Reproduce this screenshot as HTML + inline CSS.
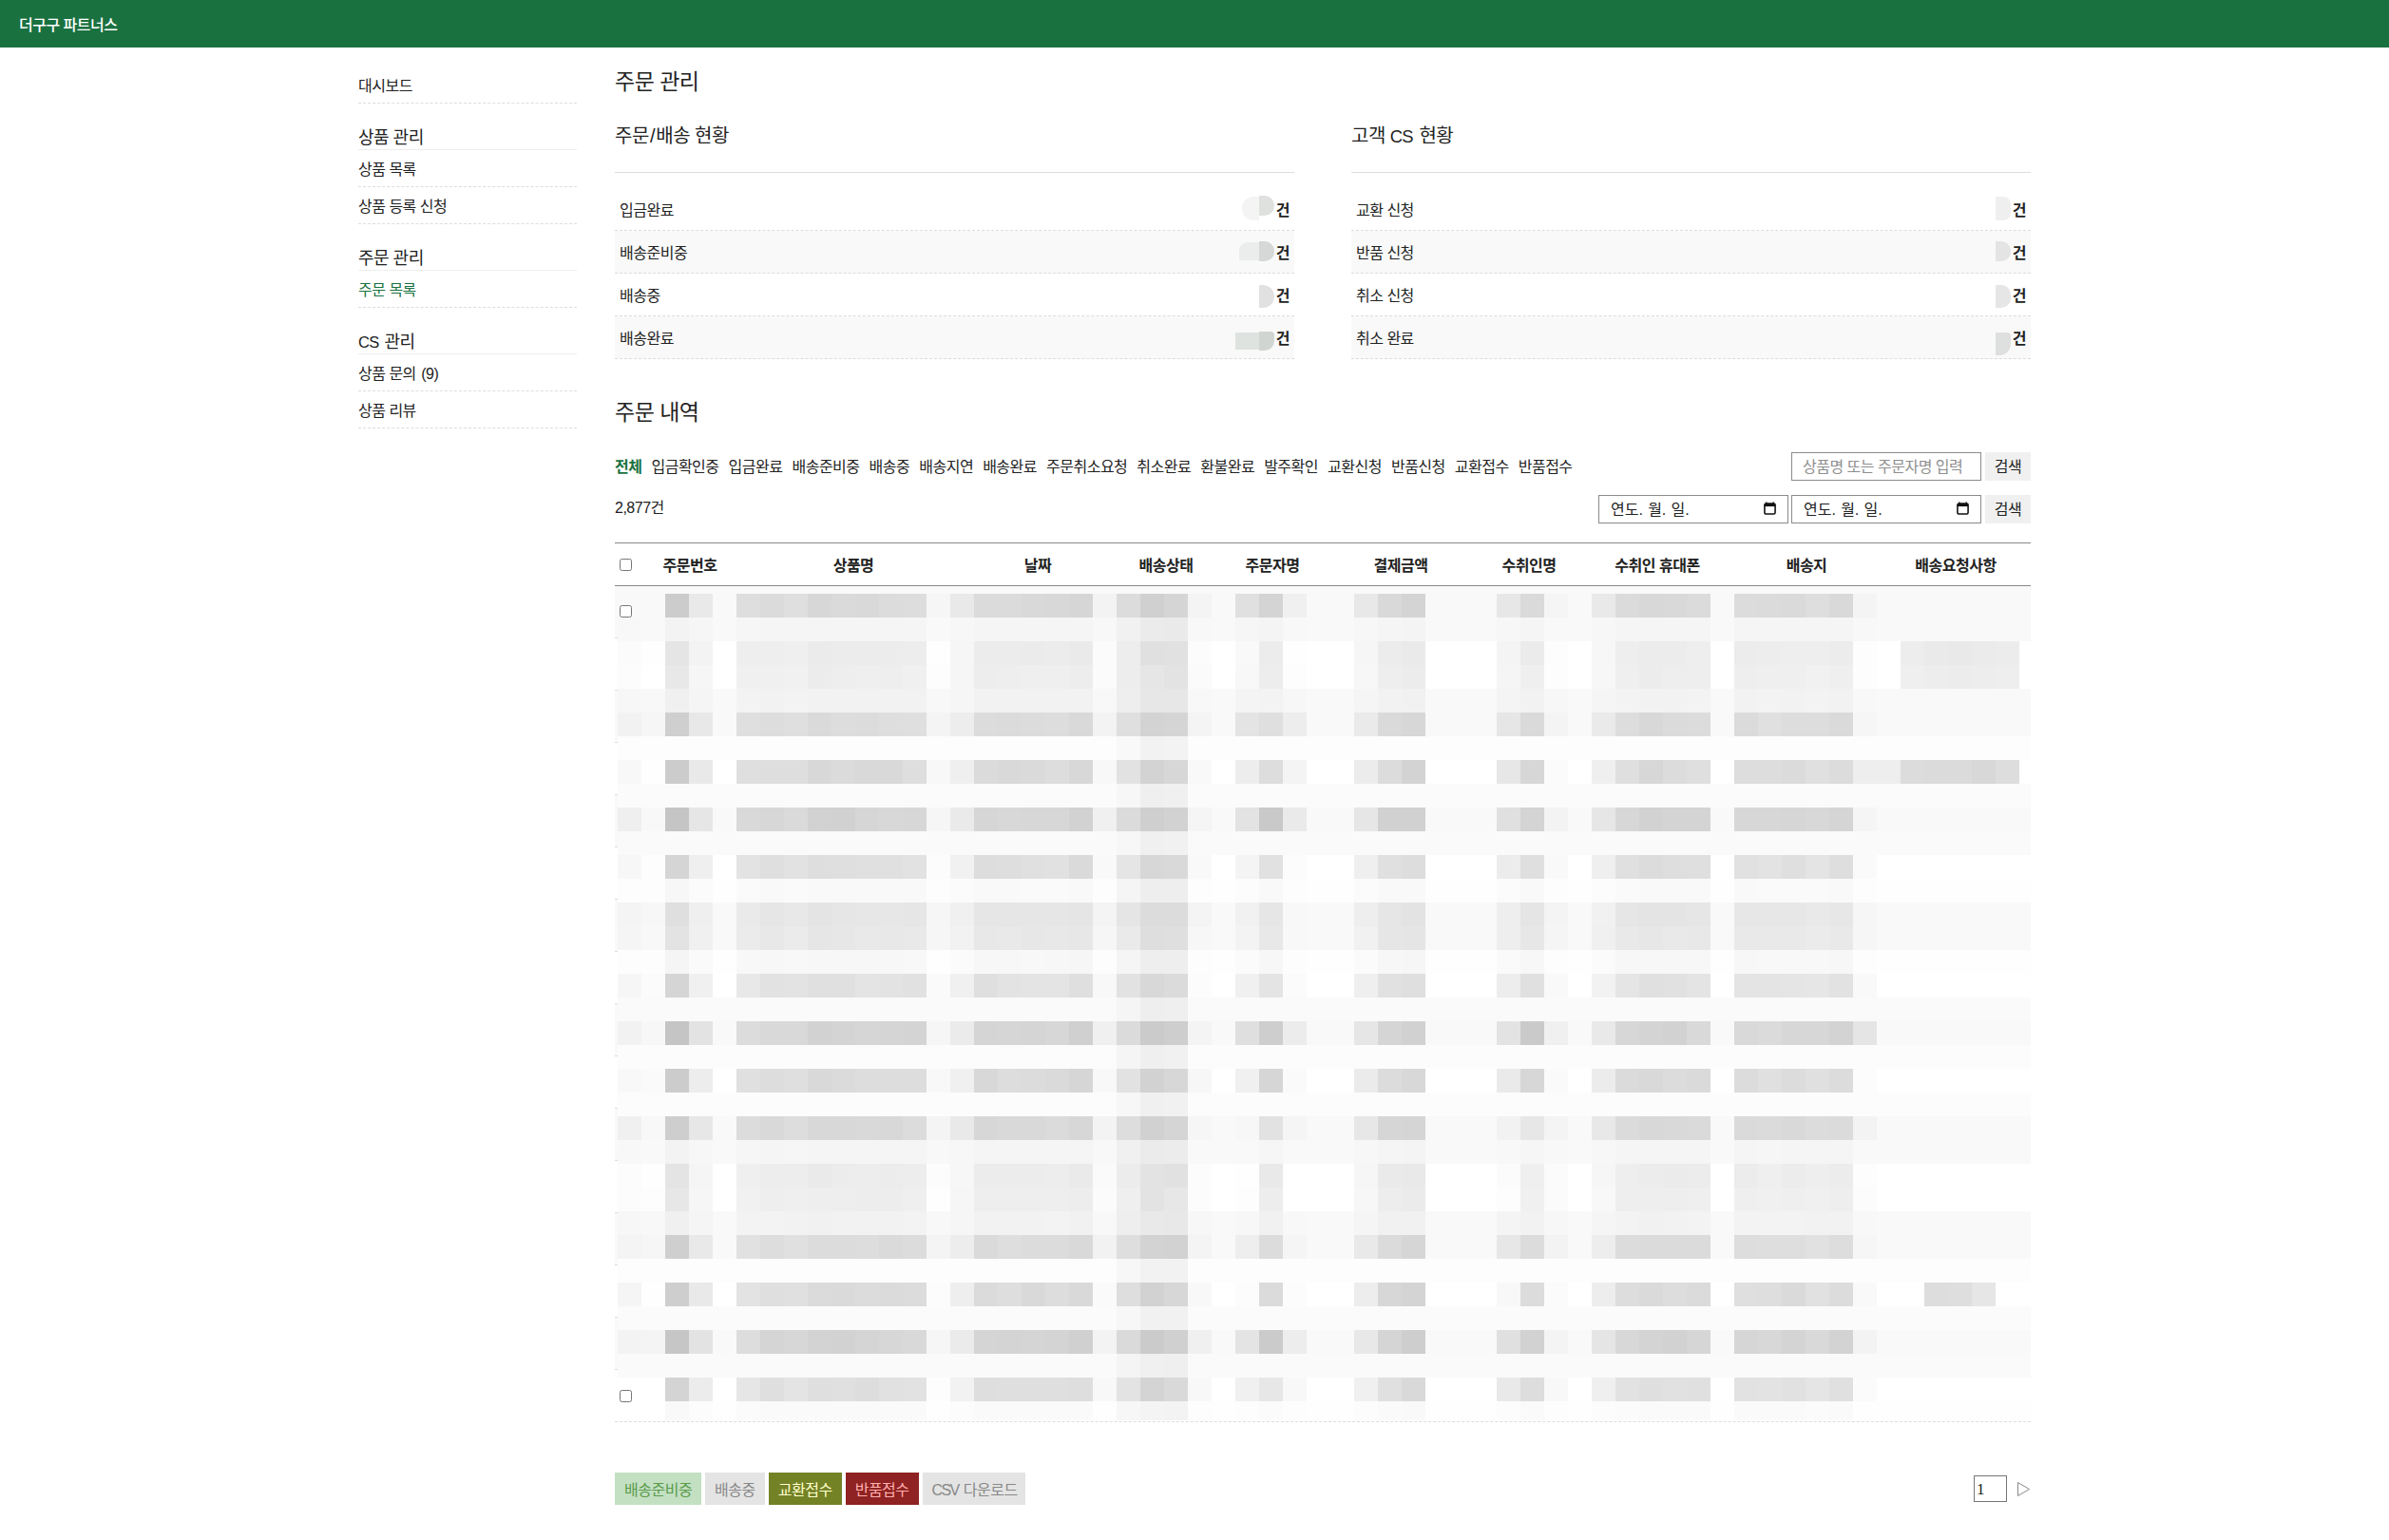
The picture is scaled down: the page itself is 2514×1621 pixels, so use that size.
<!DOCTYPE html>
<html lang="ko">
<head>
<meta charset="utf-8">
<title>더구구 파트너스</title>
<style>
*{box-sizing:border-box;}
html,body{margin:0;padding:0;}
body{width:2514px;height:1621px;overflow:hidden;background:#fff;color:#222;
 font-family:"Liberation Sans","Noto Sans CJK KR",sans-serif;font-size:16px;line-height:24px;letter-spacing:-0.5px;position:relative;}
a{color:inherit;text-decoration:none;}
ul{list-style:none;margin:0;padding:0;}
h1,h2,h3,h4,p{margin:0;font-weight:400;}
#hd{position:absolute;left:0;top:0;width:2514px;height:50px;background:#1a7140;color:#fff;overflow:hidden;}
#hd h1{position:absolute;left:20px;top:0;line-height:54px;font-size:16px;font-weight:500;}
#side{position:absolute;left:377px;top:70px;width:230px;}
#side .it{display:block;height:39px;line-height:42px;border-bottom:1px dashed #ddd;overflow:hidden;}
#side .hd{display:block;margin-top:21px;height:28px;line-height:31px;font-size:18px;border-bottom:1px solid #eee;overflow:hidden;}
#side .on{color:#1a7140;}
#main{position:absolute;left:647px;top:0;width:1490px;}
.abs{position:absolute;white-space:nowrap;}
h2.t{font-size:23px;line-height:37px;}
h3.t{font-size:20px;line-height:30px;}
.hr{position:absolute;height:1px;background:#ddd;}
.st{position:absolute;top:198px;width:715px;}
.st li{height:45px;border-bottom:1px dashed #ddd;padding:0 5px;line-height:48px;position:relative;overflow:hidden;}
.st li:nth-child(even){background:#f9f9f9;}
.st li b{position:absolute;right:5px;top:0;font-weight:700;}
.st li i{position:absolute;display:block;}
#tabs{left:0;top:480px;line-height:24px;}
#tabs a{margin-right:10px;}
#tabs a.on{color:#1a7140;font-weight:700;}
.inp{position:absolute;height:30px;border:1px solid #8a8a8a;background:#fff;line-height:30px;padding:0 11px;font-size:16px;overflow:hidden;}
.btn{position:absolute;height:30px;width:48px;background:#f0f0f0;line-height:32px;text-align:center;font-size:16px;overflow:hidden;}
.cal{position:absolute;right:12px;top:6px;}
.l{font-size:.92em;letter-spacing:-0.8px;margin-right:1.6px;}
#th{position:absolute;left:0;top:571px;width:1490px;height:46px;border-top:1px solid #888;border-bottom:1px solid #888;}
#th span{position:absolute;top:0;line-height:47px;font-weight:700;transform:translateX(-50%);white-space:nowrap;}
.cb{position:absolute;width:13px;height:13px;border:1px solid #767676;border-radius:2.5px;background:#fff;}
#tb{position:absolute;left:0;top:617px;width:1490px;}
#tb div{height:55px;border-bottom:1px dashed #ddd;}
#tb div:nth-child(odd){background:#f9f9f9;}
#acts{left:0;top:1550px;font-size:0;}
#acts span{display:inline-block;height:34px;line-height:38px;padding:0 10px;font-size:16px;margin-right:4px;overflow:hidden;vertical-align:top;}
#acts span u{text-decoration:none;letter-spacing:-1.7px;margin-right:1.5px;}
</style>
</head>
<body>
<div id="hd"><h1>더구구 파트너스</h1></div>
<div id="side">
 <a class="it">대시보드</a>
 <span class="hd">상품 관리</span>
 <a class="it">상품 목록</a>
 <a class="it">상품 등록 신청</a>
 <span class="hd">주문 관리</span>
 <a class="it on">주문 목록</a>
 <span class="hd"><span class="l">CS</span> 관리</span>
 <a class="it">상품 문의 <span style="margin-left:1.5px">(9)</span></a>
 <a class="it">상품 리뷰</a>
</div>
<div id="main">
 <h2 class="t abs" style="left:0;top:68px">주문 관리</h2>
 <h3 class="t abs" style="left:0;top:128px">주문<span style="margin:0 1.2px">/</span>배송 현황</h3>
 <div class="hr" style="left:0;top:181px;width:715px"></div>
 <ul class="st" style="left:0">
  <li>입금완료<b>건</b></li>
  <li>배송준비중<b>건</b></li>
  <li>배송중<b>건</b></li>
  <li>배송완료<b>건</b></li>
 </ul>
 <h3 class="t abs" style="left:775px;top:128px">고객 <span class="l">CS</span> 현황</h3>
 <div class="hr" style="left:775px;top:181px;width:715px"></div>
 <ul class="st" style="left:775px">
  <li>교환 신청<b>건</b></li>
  <li>반품 신청<b>건</b></li>
  <li>취소 신청<b>건</b></li>
  <li>취소 완료<b>건</b></li>
 </ul>
 <i class="abs" style="left:660px;top:207px;width:18px;height:25px;background:#f3f4f3;border-radius:12px 0 0 12px"></i><i class="abs" style="left:678px;top:206px;width:16px;height:21px;background:#dfe1df;border-radius:0 10px 10px 0"></i><i class="abs" style="left:657px;top:255px;width:21px;height:19px;background:#ebecec;border-radius:9px 0 0 2px"></i><i class="abs" style="left:678px;top:254px;width:16px;height:21px;background:#d5d8d6;border-radius:0 10px 10px 0"></i><i class="abs" style="left:678px;top:300px;width:16px;height:24px;background:#e0e1e0;border-radius:0 12px 12px 0"></i><i class="abs" style="left:653px;top:350px;width:25px;height:18px;background:#dfe3e0;border-radius:0"></i><i class="abs" style="left:678px;top:349px;width:16px;height:20px;background:#d0d5d2;border-radius:0 4px 10px 0"></i><i class="abs" style="left:1453px;top:207px;width:16px;height:25px;background:#eeefee;border-radius:0 8px 8px 0"></i><i class="abs" style="left:1453px;top:254px;width:16px;height:21px;background:#e3e4e3;border-radius:0 10px 10px 0"></i><i class="abs" style="left:1453px;top:300px;width:16px;height:24px;background:#e5e6e5;border-radius:0 10px 10px 0"></i><i class="abs" style="left:1453px;top:350px;width:16px;height:24px;background:#dee0df;border-radius:0 4px 12px 0"></i>
 <h2 class="t abs" style="left:0;top:416px">주문 내역</h2>
 <div id="tabs" class="abs"><a class="on">전체</a><a>입금확인중</a><a>입금완료</a><a>배송준비중</a><a>배송중</a><a>배송지연</a><a>배송완료</a><a>주문취소요청</a><a>취소완료</a><a>환불완료</a><a>발주확인</a><a>교환신청</a><a>반품신청</a><a>교환접수</a><a>반품접수</a></div>
 <div class="inp" style="left:1238px;top:476px;width:200px;color:#8e8e8e">상품명 또는 주문자명 입력</div>
 <div class="btn" style="left:1442px;top:476px">검색</div>
 <div class="abs" style="left:0;top:523px">2,877건</div>
 <div class="inp" style="left:1035px;top:521px;width:200px;letter-spacing:0;word-spacing:0.8px;padding-left:12px">연도. 월. 일.<svg class="cal" width="13" height="14" viewBox="0 0 14 15"><path d="M3 0.5v2M11 0.5v2" stroke="#111" stroke-width="1.6" fill="none"/><rect x="1" y="2.2" width="12" height="11.8" rx="1.6" fill="none" stroke="#111" stroke-width="1.7"/><rect x="1" y="2.2" width="12" height="3.2" fill="#111"/></svg></div>
 <div class="inp" style="left:1238px;top:521px;width:200px;letter-spacing:0;word-spacing:0.8px;padding-left:12px">연도. 월. 일.<svg class="cal" width="13" height="14" viewBox="0 0 14 15"><path d="M3 0.5v2M11 0.5v2" stroke="#111" stroke-width="1.6" fill="none"/><rect x="1" y="2.2" width="12" height="11.8" rx="1.6" fill="none" stroke="#111" stroke-width="1.7"/><rect x="1" y="2.2" width="12" height="3.2" fill="#111"/></svg></div>
 <div class="btn" style="left:1442px;top:521px">검색</div>
 <div id="th">
  <div class="cb" style="left:5px;top:16px"></div>
  <span style="left:79px">주문번호</span>
  <span style="left:251px">상품명</span>
  <span style="left:445px">날짜</span>
  <span style="left:580px">배송상태</span>
  <span style="left:692px">주문자명</span>
  <span style="left:827px">결제금액</span>
  <span style="left:962px">수취인명</span>
  <span style="left:1097px">수취인 휴대폰</span>
  <span style="left:1254px">배송지</span>
  <span style="left:1411px">배송요청사항</span>
 </div>
 <div id="tb"><div></div><div></div><div></div><div></div><div></div><div></div><div></div><div></div><div></div><div></div><div></div><div></div><div></div><div></div><div></div><div></div></div>
 <div class="cb" style="left:5px;top:637px"></div>
 <div class="cb" style="left:5px;top:1463px"></div>
 <svg id="mz" class="abs" style="left:3px;top:625px" width="1487" height="870" viewBox="0 0 1487 870" shape-rendering="crispEdges">
<rect x="50" y="0" width="25" height="25" fill="#cccccc"/>
<rect x="75" y="0" width="25" height="25" fill="#e9e9e9"/>
<rect x="100" y="0" width="25" height="25" fill="#f9f9f9"/>
<rect x="125" y="0" width="25" height="25" fill="#dedede"/>
<rect x="150" y="0" width="25" height="25" fill="#dbdbdb"/>
<rect x="175" y="0" width="25" height="25" fill="#dfdfdf"/>
<rect x="200" y="0" width="25" height="25" fill="#d7d7d7"/>
<rect x="225" y="0" width="25" height="25" fill="#dadada"/>
<rect x="250" y="0" width="25" height="25" fill="#d9d9d9"/>
<rect x="275" y="0" width="25" height="25" fill="#dcdcdc"/>
<rect x="300" y="0" width="25" height="25" fill="#dddddd"/>
<rect x="325" y="0" width="25" height="25" fill="#f6f6f6"/>
<rect x="350" y="0" width="25" height="25" fill="#e9e9e9"/>
<rect x="375" y="0" width="50" height="25" fill="#dbdbdb"/>
<rect x="425" y="0" width="25" height="25" fill="#d9d9d9"/>
<rect x="450" y="0" width="25" height="25" fill="#d8d8d8"/>
<rect x="475" y="0" width="25" height="25" fill="#d6d6d6"/>
<rect x="500" y="0" width="25" height="25" fill="#f3f3f3"/>
<rect x="525" y="0" width="25" height="25" fill="#dcdcdc"/>
<rect x="550" y="0" width="25" height="25" fill="#d0d0d0"/>
<rect x="575" y="0" width="25" height="25" fill="#d5d5d5"/>
<rect x="600" y="0" width="25" height="25" fill="#f4f4f4"/>
<rect x="625" y="0" width="25" height="25" fill="#f9f9f9"/>
<rect x="650" y="0" width="25" height="25" fill="#e0e0e0"/>
<rect x="675" y="0" width="25" height="25" fill="#d4d4d4"/>
<rect x="700" y="0" width="25" height="25" fill="#f0f0f0"/>
<rect x="725" y="0" width="50" height="25" fill="#f9f9f9"/>
<rect x="775" y="0" width="25" height="25" fill="#e8e8e8"/>
<rect x="800" y="0" width="25" height="25" fill="#d9d9d9"/>
<rect x="825" y="0" width="25" height="25" fill="#d4d4d4"/>
<rect x="850" y="0" width="75" height="25" fill="#f9f9f9"/>
<rect x="925" y="0" width="25" height="25" fill="#e7e7e7"/>
<rect x="950" y="0" width="25" height="25" fill="#dadada"/>
<rect x="975" y="0" width="25" height="25" fill="#f5f5f5"/>
<rect x="1000" y="0" width="25" height="25" fill="#f9f9f9"/>
<rect x="1025" y="0" width="25" height="25" fill="#e9e9e9"/>
<rect x="1050" y="0" width="25" height="25" fill="#dbdbdb"/>
<rect x="1075" y="0" width="25" height="25" fill="#d8d8d8"/>
<rect x="1100" y="0" width="25" height="25" fill="#d9d9d9"/>
<rect x="1125" y="0" width="25" height="25" fill="#dbdbdb"/>
<rect x="1150" y="0" width="25" height="25" fill="#f9f9f9"/>
<rect x="1175" y="0" width="25" height="25" fill="#dcdcdc"/>
<rect x="1200" y="0" width="25" height="25" fill="#dbdbdb"/>
<rect x="1225" y="0" width="25" height="25" fill="#dadada"/>
<rect x="1250" y="0" width="25" height="25" fill="#dedede"/>
<rect x="1275" y="0" width="25" height="25" fill="#d9d9d9"/>
<rect x="1300" y="0" width="25" height="25" fill="#f4f4f4"/>
<rect x="1325" y="0" width="162" height="25" fill="#f9f9f9"/>
<rect x="0" y="25" width="25" height="25" fill="#f8f8f8"/>
<rect x="25" y="25" width="25" height="25" fill="#f9f9f9"/>
<rect x="50" y="25" width="25" height="25" fill="#f3f3f3"/>
<rect x="75" y="25" width="25" height="25" fill="#f6f6f6"/>
<rect x="100" y="25" width="25" height="25" fill="#f9f9f9"/>
<rect x="125" y="25" width="25" height="25" fill="#f6f6f6"/>
<rect x="150" y="25" width="175" height="25" fill="#f5f5f5"/>
<rect x="325" y="25" width="25" height="25" fill="#f9f9f9"/>
<rect x="350" y="25" width="25" height="25" fill="#f7f7f7"/>
<rect x="375" y="25" width="125" height="25" fill="#f5f5f5"/>
<rect x="500" y="25" width="25" height="25" fill="#f8f8f8"/>
<rect x="525" y="25" width="25" height="25" fill="#f1f1f1"/>
<rect x="550" y="25" width="25" height="25" fill="#ebebeb"/>
<rect x="575" y="25" width="25" height="25" fill="#eaeaea"/>
<rect x="600" y="25" width="25" height="25" fill="#f8f8f8"/>
<rect x="625" y="25" width="25" height="25" fill="#f9f9f9"/>
<rect x="650" y="25" width="25" height="25" fill="#f6f6f6"/>
<rect x="675" y="25" width="25" height="25" fill="#f4f4f4"/>
<rect x="700" y="25" width="25" height="25" fill="#f8f8f8"/>
<rect x="725" y="25" width="50" height="25" fill="#f9f9f9"/>
<rect x="775" y="25" width="25" height="25" fill="#f7f7f7"/>
<rect x="800" y="25" width="25" height="25" fill="#f5f5f5"/>
<rect x="825" y="25" width="25" height="25" fill="#f4f4f4"/>
<rect x="850" y="25" width="75" height="25" fill="#f9f9f9"/>
<rect x="925" y="25" width="25" height="25" fill="#f7f7f7"/>
<rect x="950" y="25" width="25" height="25" fill="#f5f5f5"/>
<rect x="975" y="25" width="50" height="25" fill="#f9f9f9"/>
<rect x="1025" y="25" width="25" height="25" fill="#f7f7f7"/>
<rect x="1050" y="25" width="100" height="25" fill="#f5f5f5"/>
<rect x="1150" y="25" width="25" height="25" fill="#f9f9f9"/>
<rect x="1175" y="25" width="125" height="25" fill="#f5f5f5"/>
<rect x="1300" y="25" width="25" height="25" fill="#f8f8f8"/>
<rect x="1325" y="25" width="162" height="25" fill="#f9f9f9"/>
<rect x="0" y="50" width="25" height="25" fill="#fbfbfb"/>
<rect x="25" y="50" width="25" height="25" fill="#fefefe"/>
<rect x="50" y="50" width="25" height="25" fill="#e5e5e5"/>
<rect x="75" y="50" width="25" height="25" fill="#f3f3f3"/>
<rect x="100" y="50" width="25" height="25" fill="#ffffff"/>
<rect x="125" y="50" width="50" height="25" fill="#eeeeee"/>
<rect x="175" y="50" width="25" height="25" fill="#efefef"/>
<rect x="200" y="50" width="25" height="25" fill="#ebebeb"/>
<rect x="225" y="50" width="75" height="25" fill="#ececec"/>
<rect x="300" y="50" width="25" height="25" fill="#ededed"/>
<rect x="325" y="50" width="25" height="25" fill="#fefefe"/>
<rect x="350" y="50" width="25" height="25" fill="#f6f6f6"/>
<rect x="375" y="50" width="50" height="25" fill="#ececec"/>
<rect x="425" y="50" width="25" height="25" fill="#ebebeb"/>
<rect x="450" y="50" width="25" height="25" fill="#ececec"/>
<rect x="475" y="50" width="25" height="25" fill="#eaeaea"/>
<rect x="500" y="50" width="25" height="25" fill="#fbfbfb"/>
<rect x="525" y="50" width="25" height="25" fill="#ededed"/>
<rect x="550" y="50" width="25" height="25" fill="#e0e0e0"/>
<rect x="575" y="50" width="25" height="25" fill="#e1e1e1"/>
<rect x="600" y="50" width="25" height="25" fill="#fcfcfc"/>
<rect x="625" y="50" width="25" height="25" fill="#ffffff"/>
<rect x="650" y="50" width="25" height="25" fill="#f9f9f9"/>
<rect x="675" y="50" width="25" height="25" fill="#ececec"/>
<rect x="700" y="50" width="25" height="25" fill="#fefefe"/>
<rect x="725" y="50" width="50" height="25" fill="#ffffff"/>
<rect x="775" y="50" width="25" height="25" fill="#f6f6f6"/>
<rect x="800" y="50" width="25" height="25" fill="#ececec"/>
<rect x="825" y="50" width="25" height="25" fill="#eaeaea"/>
<rect x="850" y="50" width="75" height="25" fill="#ffffff"/>
<rect x="925" y="50" width="25" height="25" fill="#f4f4f4"/>
<rect x="950" y="50" width="25" height="25" fill="#ebebeb"/>
<rect x="975" y="50" width="25" height="25" fill="#fdfdfd"/>
<rect x="1000" y="50" width="25" height="25" fill="#ffffff"/>
<rect x="1025" y="50" width="25" height="25" fill="#f7f7f7"/>
<rect x="1050" y="50" width="25" height="25" fill="#eeeeee"/>
<rect x="1075" y="50" width="50" height="25" fill="#ececec"/>
<rect x="1125" y="50" width="25" height="25" fill="#eeeeee"/>
<rect x="1150" y="50" width="25" height="25" fill="#ffffff"/>
<rect x="1175" y="50" width="25" height="25" fill="#ececec"/>
<rect x="1200" y="50" width="25" height="25" fill="#ededed"/>
<rect x="1225" y="50" width="50" height="25" fill="#eeeeee"/>
<rect x="1275" y="50" width="25" height="25" fill="#ececec"/>
<rect x="1300" y="50" width="25" height="25" fill="#fdfdfd"/>
<rect x="1325" y="50" width="25" height="25" fill="#ffffff"/>
<rect x="1350" y="50" width="25" height="25" fill="#ededed"/>
<rect x="1375" y="50" width="25" height="25" fill="#eaeaea"/>
<rect x="1400" y="50" width="25" height="25" fill="#e9e9e9"/>
<rect x="1425" y="50" width="25" height="25" fill="#ebebeb"/>
<rect x="1450" y="50" width="25" height="25" fill="#ececec"/>
<rect x="1475" y="50" width="12" height="25" fill="#ffffff"/>
<rect x="0" y="75" width="25" height="25" fill="#fcfcfc"/>
<rect x="25" y="75" width="25" height="25" fill="#ffffff"/>
<rect x="50" y="75" width="25" height="25" fill="#e8e8e8"/>
<rect x="75" y="75" width="25" height="25" fill="#f6f6f6"/>
<rect x="100" y="75" width="25" height="25" fill="#ffffff"/>
<rect x="125" y="75" width="50" height="25" fill="#f0f0f0"/>
<rect x="175" y="75" width="25" height="25" fill="#f1f1f1"/>
<rect x="200" y="75" width="25" height="25" fill="#ececec"/>
<rect x="225" y="75" width="25" height="25" fill="#eeeeee"/>
<rect x="250" y="75" width="25" height="25" fill="#efefef"/>
<rect x="275" y="75" width="25" height="25" fill="#eeeeee"/>
<rect x="300" y="75" width="25" height="25" fill="#f0f0f0"/>
<rect x="325" y="75" width="25" height="25" fill="#fdfdfd"/>
<rect x="350" y="75" width="25" height="25" fill="#f6f6f6"/>
<rect x="375" y="75" width="25" height="25" fill="#ededed"/>
<rect x="400" y="75" width="25" height="25" fill="#eeeeee"/>
<rect x="425" y="75" width="50" height="25" fill="#efefef"/>
<rect x="475" y="75" width="25" height="25" fill="#ededed"/>
<rect x="500" y="75" width="25" height="25" fill="#fbfbfb"/>
<rect x="525" y="75" width="25" height="25" fill="#ededed"/>
<rect x="550" y="75" width="25" height="25" fill="#e6e6e6"/>
<rect x="575" y="75" width="25" height="25" fill="#e3e3e3"/>
<rect x="600" y="75" width="25" height="25" fill="#fbfbfb"/>
<rect x="625" y="75" width="25" height="25" fill="#ffffff"/>
<rect x="650" y="75" width="25" height="25" fill="#f8f8f8"/>
<rect x="675" y="75" width="25" height="25" fill="#ededed"/>
<rect x="700" y="75" width="25" height="25" fill="#fdfdfd"/>
<rect x="725" y="75" width="50" height="25" fill="#ffffff"/>
<rect x="775" y="75" width="25" height="25" fill="#f7f7f7"/>
<rect x="800" y="75" width="25" height="25" fill="#eeeeee"/>
<rect x="825" y="75" width="25" height="25" fill="#ececec"/>
<rect x="850" y="75" width="75" height="25" fill="#ffffff"/>
<rect x="925" y="75" width="25" height="25" fill="#f5f5f5"/>
<rect x="950" y="75" width="25" height="25" fill="#efefef"/>
<rect x="975" y="75" width="25" height="25" fill="#fdfdfd"/>
<rect x="1000" y="75" width="25" height="25" fill="#ffffff"/>
<rect x="1025" y="75" width="25" height="25" fill="#f7f7f7"/>
<rect x="1050" y="75" width="25" height="25" fill="#efefef"/>
<rect x="1075" y="75" width="25" height="25" fill="#ececec"/>
<rect x="1100" y="75" width="50" height="25" fill="#eeeeee"/>
<rect x="1150" y="75" width="25" height="25" fill="#ffffff"/>
<rect x="1175" y="75" width="25" height="25" fill="#eeeeee"/>
<rect x="1200" y="75" width="50" height="25" fill="#efefef"/>
<rect x="1250" y="75" width="25" height="25" fill="#f1f1f1"/>
<rect x="1275" y="75" width="25" height="25" fill="#efefef"/>
<rect x="1300" y="75" width="25" height="25" fill="#fdfdfd"/>
<rect x="1325" y="75" width="25" height="25" fill="#ffffff"/>
<rect x="1350" y="75" width="25" height="25" fill="#efefef"/>
<rect x="1375" y="75" width="25" height="25" fill="#ededed"/>
<rect x="1400" y="75" width="25" height="25" fill="#ececec"/>
<rect x="1425" y="75" width="25" height="25" fill="#ededed"/>
<rect x="1450" y="75" width="25" height="25" fill="#eeeeee"/>
<rect x="1475" y="75" width="12" height="25" fill="#ffffff"/>
<rect x="0" y="100" width="25" height="25" fill="#f7f7f7"/>
<rect x="25" y="100" width="25" height="25" fill="#f8f8f8"/>
<rect x="50" y="100" width="25" height="25" fill="#f0f0f0"/>
<rect x="75" y="100" width="25" height="25" fill="#f5f5f5"/>
<rect x="100" y="100" width="25" height="25" fill="#f9f9f9"/>
<rect x="125" y="100" width="25" height="25" fill="#f3f3f3"/>
<rect x="150" y="100" width="25" height="25" fill="#f2f2f2"/>
<rect x="175" y="100" width="25" height="25" fill="#f3f3f3"/>
<rect x="200" y="100" width="125" height="25" fill="#f2f2f2"/>
<rect x="325" y="100" width="25" height="25" fill="#f8f8f8"/>
<rect x="350" y="100" width="25" height="25" fill="#f6f6f6"/>
<rect x="375" y="100" width="125" height="25" fill="#f2f2f2"/>
<rect x="500" y="100" width="25" height="25" fill="#f8f8f8"/>
<rect x="525" y="100" width="25" height="25" fill="#eeeeee"/>
<rect x="550" y="100" width="50" height="25" fill="#e7e7e7"/>
<rect x="600" y="100" width="25" height="25" fill="#f8f8f8"/>
<rect x="625" y="100" width="25" height="25" fill="#f9f9f9"/>
<rect x="650" y="100" width="25" height="25" fill="#f4f4f4"/>
<rect x="675" y="100" width="25" height="25" fill="#f3f3f3"/>
<rect x="700" y="100" width="25" height="25" fill="#f7f7f7"/>
<rect x="725" y="100" width="50" height="25" fill="#f9f9f9"/>
<rect x="775" y="100" width="25" height="25" fill="#f5f5f5"/>
<rect x="800" y="100" width="25" height="25" fill="#f2f2f2"/>
<rect x="825" y="100" width="25" height="25" fill="#f1f1f1"/>
<rect x="850" y="100" width="75" height="25" fill="#f9f9f9"/>
<rect x="925" y="100" width="25" height="25" fill="#f4f4f4"/>
<rect x="950" y="100" width="25" height="25" fill="#f2f2f2"/>
<rect x="975" y="100" width="25" height="25" fill="#f7f7f7"/>
<rect x="1000" y="100" width="25" height="25" fill="#f9f9f9"/>
<rect x="1025" y="100" width="25" height="25" fill="#f5f5f5"/>
<rect x="1050" y="100" width="25" height="25" fill="#f3f3f3"/>
<rect x="1075" y="100" width="50" height="25" fill="#f2f2f2"/>
<rect x="1125" y="100" width="25" height="25" fill="#f3f3f3"/>
<rect x="1150" y="100" width="25" height="25" fill="#f9f9f9"/>
<rect x="1175" y="100" width="25" height="25" fill="#f2f2f2"/>
<rect x="1200" y="100" width="25" height="25" fill="#f3f3f3"/>
<rect x="1225" y="100" width="25" height="25" fill="#f2f2f2"/>
<rect x="1250" y="100" width="25" height="25" fill="#f3f3f3"/>
<rect x="1275" y="100" width="25" height="25" fill="#f2f2f2"/>
<rect x="1300" y="100" width="25" height="25" fill="#f8f8f8"/>
<rect x="1325" y="100" width="162" height="25" fill="#f9f9f9"/>
<rect x="0" y="125" width="25" height="25" fill="#f2f2f2"/>
<rect x="25" y="125" width="25" height="25" fill="#f6f6f6"/>
<rect x="50" y="125" width="25" height="25" fill="#cfcfcf"/>
<rect x="75" y="125" width="25" height="25" fill="#e8e8e8"/>
<rect x="100" y="125" width="25" height="25" fill="#f9f9f9"/>
<rect x="125" y="125" width="25" height="25" fill="#dfdfdf"/>
<rect x="150" y="125" width="25" height="25" fill="#dddddd"/>
<rect x="175" y="125" width="25" height="25" fill="#dfdfdf"/>
<rect x="200" y="125" width="25" height="25" fill="#dadada"/>
<rect x="225" y="125" width="25" height="25" fill="#dddddd"/>
<rect x="250" y="125" width="25" height="25" fill="#dcdcdc"/>
<rect x="275" y="125" width="25" height="25" fill="#dedede"/>
<rect x="300" y="125" width="25" height="25" fill="#dfdfdf"/>
<rect x="325" y="125" width="25" height="25" fill="#f4f4f4"/>
<rect x="350" y="125" width="25" height="25" fill="#ededed"/>
<rect x="375" y="125" width="25" height="25" fill="#dcdcdc"/>
<rect x="400" y="125" width="25" height="25" fill="#dbdbdb"/>
<rect x="425" y="125" width="25" height="25" fill="#dcdcdc"/>
<rect x="450" y="125" width="25" height="25" fill="#dddddd"/>
<rect x="475" y="125" width="25" height="25" fill="#d9d9d9"/>
<rect x="500" y="125" width="25" height="25" fill="#f3f3f3"/>
<rect x="525" y="125" width="25" height="25" fill="#dfdfdf"/>
<rect x="550" y="125" width="25" height="25" fill="#d3d3d3"/>
<rect x="575" y="125" width="25" height="25" fill="#d5d5d5"/>
<rect x="600" y="125" width="25" height="25" fill="#f4f4f4"/>
<rect x="625" y="125" width="25" height="25" fill="#f9f9f9"/>
<rect x="650" y="125" width="25" height="25" fill="#e4e4e4"/>
<rect x="675" y="125" width="25" height="25" fill="#dfdfdf"/>
<rect x="700" y="125" width="25" height="25" fill="#ededed"/>
<rect x="725" y="125" width="50" height="25" fill="#f9f9f9"/>
<rect x="775" y="125" width="25" height="25" fill="#eaeaea"/>
<rect x="800" y="125" width="25" height="25" fill="#dadada"/>
<rect x="825" y="125" width="25" height="25" fill="#d7d7d7"/>
<rect x="850" y="125" width="75" height="25" fill="#f9f9f9"/>
<rect x="925" y="125" width="25" height="25" fill="#e6e6e6"/>
<rect x="950" y="125" width="25" height="25" fill="#dadada"/>
<rect x="975" y="125" width="25" height="25" fill="#f4f4f4"/>
<rect x="1000" y="125" width="25" height="25" fill="#f9f9f9"/>
<rect x="1025" y="125" width="25" height="25" fill="#eaeaea"/>
<rect x="1050" y="125" width="25" height="25" fill="#dddddd"/>
<rect x="1075" y="125" width="25" height="25" fill="#d8d8d8"/>
<rect x="1100" y="125" width="25" height="25" fill="#dbdbdb"/>
<rect x="1125" y="125" width="25" height="25" fill="#dcdcdc"/>
<rect x="1150" y="125" width="25" height="25" fill="#f9f9f9"/>
<rect x="1175" y="125" width="25" height="25" fill="#dbdbdb"/>
<rect x="1200" y="125" width="25" height="25" fill="#e0e0e0"/>
<rect x="1225" y="125" width="50" height="25" fill="#dddddd"/>
<rect x="1275" y="125" width="25" height="25" fill="#dadada"/>
<rect x="1300" y="125" width="25" height="25" fill="#f6f6f6"/>
<rect x="1325" y="125" width="162" height="25" fill="#f9f9f9"/>
<rect x="0" y="150" width="525" height="25" fill="#fdfdfd"/>
<rect x="525" y="150" width="25" height="25" fill="#f9f9f9"/>
<rect x="550" y="150" width="25" height="25" fill="#f2f2f2"/>
<rect x="575" y="150" width="25" height="25" fill="#f3f3f3"/>
<rect x="600" y="150" width="887" height="25" fill="#fdfdfd"/>
<rect x="0" y="175" width="25" height="25" fill="#f8f8f8"/>
<rect x="25" y="175" width="25" height="25" fill="#fefefe"/>
<rect x="50" y="175" width="25" height="25" fill="#cccccc"/>
<rect x="75" y="175" width="25" height="25" fill="#e9e9e9"/>
<rect x="100" y="175" width="25" height="25" fill="#ffffff"/>
<rect x="125" y="175" width="25" height="25" fill="#dfdfdf"/>
<rect x="150" y="175" width="50" height="25" fill="#dedede"/>
<rect x="200" y="175" width="25" height="25" fill="#d8d8d8"/>
<rect x="225" y="175" width="25" height="25" fill="#dbdbdb"/>
<rect x="250" y="175" width="50" height="25" fill="#d9d9d9"/>
<rect x="300" y="175" width="25" height="25" fill="#dedede"/>
<rect x="325" y="175" width="25" height="25" fill="#f8f8f8"/>
<rect x="350" y="175" width="25" height="25" fill="#efefef"/>
<rect x="375" y="175" width="25" height="25" fill="#dbdbdb"/>
<rect x="400" y="175" width="25" height="25" fill="#d9d9d9"/>
<rect x="425" y="175" width="25" height="25" fill="#dadada"/>
<rect x="450" y="175" width="25" height="25" fill="#dddddd"/>
<rect x="475" y="175" width="25" height="25" fill="#d8d8d8"/>
<rect x="500" y="175" width="25" height="25" fill="#f8f8f8"/>
<rect x="525" y="175" width="25" height="25" fill="#e2e2e2"/>
<rect x="550" y="175" width="25" height="25" fill="#d3d3d3"/>
<rect x="575" y="175" width="25" height="25" fill="#d7d7d7"/>
<rect x="600" y="175" width="25" height="25" fill="#f9f9f9"/>
<rect x="625" y="175" width="25" height="25" fill="#ffffff"/>
<rect x="650" y="175" width="25" height="25" fill="#ededed"/>
<rect x="675" y="175" width="25" height="25" fill="#dddddd"/>
<rect x="700" y="175" width="25" height="25" fill="#f4f4f4"/>
<rect x="725" y="175" width="50" height="25" fill="#ffffff"/>
<rect x="775" y="175" width="25" height="25" fill="#ececec"/>
<rect x="800" y="175" width="25" height="25" fill="#dcdcdc"/>
<rect x="825" y="175" width="25" height="25" fill="#d3d3d3"/>
<rect x="850" y="175" width="75" height="25" fill="#ffffff"/>
<rect x="925" y="175" width="25" height="25" fill="#e7e7e7"/>
<rect x="950" y="175" width="25" height="25" fill="#d7d7d7"/>
<rect x="975" y="175" width="25" height="25" fill="#fbfbfb"/>
<rect x="1000" y="175" width="25" height="25" fill="#ffffff"/>
<rect x="1025" y="175" width="25" height="25" fill="#efefef"/>
<rect x="1050" y="175" width="25" height="25" fill="#dfdfdf"/>
<rect x="1075" y="175" width="25" height="25" fill="#d7d7d7"/>
<rect x="1100" y="175" width="25" height="25" fill="#dcdcdc"/>
<rect x="1125" y="175" width="25" height="25" fill="#dfdfdf"/>
<rect x="1150" y="175" width="25" height="25" fill="#ffffff"/>
<rect x="1175" y="175" width="50" height="25" fill="#dddddd"/>
<rect x="1225" y="175" width="25" height="25" fill="#dbdbdb"/>
<rect x="1250" y="175" width="25" height="25" fill="#e0e0e0"/>
<rect x="1275" y="175" width="25" height="25" fill="#dcdcdc"/>
<rect x="1300" y="175" width="50" height="25" fill="#eeeeee"/>
<rect x="1350" y="175" width="25" height="25" fill="#dcdcdc"/>
<rect x="1375" y="175" width="50" height="25" fill="#dbdbdb"/>
<rect x="1425" y="175" width="25" height="25" fill="#d8d8d8"/>
<rect x="1450" y="175" width="25" height="25" fill="#dddddd"/>
<rect x="1475" y="175" width="12" height="25" fill="#ffffff"/>
<rect x="0" y="200" width="525" height="25" fill="#fbfbfb"/>
<rect x="525" y="200" width="25" height="25" fill="#f7f7f7"/>
<rect x="550" y="200" width="25" height="25" fill="#efefef"/>
<rect x="575" y="200" width="25" height="25" fill="#f0f0f0"/>
<rect x="600" y="200" width="887" height="25" fill="#fbfbfb"/>
<rect x="0" y="225" width="25" height="25" fill="#efefef"/>
<rect x="25" y="225" width="25" height="25" fill="#f8f8f8"/>
<rect x="50" y="225" width="25" height="25" fill="#c5c5c5"/>
<rect x="75" y="225" width="25" height="25" fill="#e6e6e6"/>
<rect x="100" y="225" width="25" height="25" fill="#f9f9f9"/>
<rect x="125" y="225" width="25" height="25" fill="#d9d9d9"/>
<rect x="150" y="225" width="25" height="25" fill="#d7d7d7"/>
<rect x="175" y="225" width="25" height="25" fill="#dadada"/>
<rect x="200" y="225" width="25" height="25" fill="#d2d2d2"/>
<rect x="225" y="225" width="25" height="25" fill="#d1d1d1"/>
<rect x="250" y="225" width="25" height="25" fill="#d6d6d6"/>
<rect x="275" y="225" width="25" height="25" fill="#d8d8d8"/>
<rect x="300" y="225" width="25" height="25" fill="#d7d7d7"/>
<rect x="325" y="225" width="25" height="25" fill="#f6f6f6"/>
<rect x="350" y="225" width="25" height="25" fill="#eaeaea"/>
<rect x="375" y="225" width="25" height="25" fill="#d6d6d6"/>
<rect x="400" y="225" width="25" height="25" fill="#d8d8d8"/>
<rect x="425" y="225" width="50" height="25" fill="#d7d7d7"/>
<rect x="475" y="225" width="25" height="25" fill="#d2d2d2"/>
<rect x="500" y="225" width="25" height="25" fill="#f0f0f0"/>
<rect x="525" y="225" width="25" height="25" fill="#dbdbdb"/>
<rect x="550" y="225" width="25" height="25" fill="#cfcfcf"/>
<rect x="575" y="225" width="25" height="25" fill="#d2d2d2"/>
<rect x="600" y="225" width="25" height="25" fill="#f5f5f5"/>
<rect x="625" y="225" width="25" height="25" fill="#f9f9f9"/>
<rect x="650" y="225" width="25" height="25" fill="#e3e3e3"/>
<rect x="675" y="225" width="25" height="25" fill="#c9c9c9"/>
<rect x="700" y="225" width="25" height="25" fill="#eaeaea"/>
<rect x="725" y="225" width="50" height="25" fill="#f9f9f9"/>
<rect x="775" y="225" width="25" height="25" fill="#e6e6e6"/>
<rect x="800" y="225" width="50" height="25" fill="#d1d1d1"/>
<rect x="850" y="225" width="75" height="25" fill="#f9f9f9"/>
<rect x="925" y="225" width="25" height="25" fill="#e0e0e0"/>
<rect x="950" y="225" width="25" height="25" fill="#d4d4d4"/>
<rect x="975" y="225" width="25" height="25" fill="#f3f3f3"/>
<rect x="1000" y="225" width="25" height="25" fill="#f9f9f9"/>
<rect x="1025" y="225" width="25" height="25" fill="#e6e6e6"/>
<rect x="1050" y="225" width="25" height="25" fill="#d7d7d7"/>
<rect x="1075" y="225" width="25" height="25" fill="#d2d2d2"/>
<rect x="1100" y="225" width="50" height="25" fill="#d4d4d4"/>
<rect x="1150" y="225" width="25" height="25" fill="#f9f9f9"/>
<rect x="1175" y="225" width="50" height="25" fill="#d7d7d7"/>
<rect x="1225" y="225" width="25" height="25" fill="#d6d6d6"/>
<rect x="1250" y="225" width="25" height="25" fill="#d8d8d8"/>
<rect x="1275" y="225" width="25" height="25" fill="#d5d5d5"/>
<rect x="1300" y="225" width="25" height="25" fill="#f5f5f5"/>
<rect x="1325" y="225" width="162" height="25" fill="#f9f9f9"/>
<rect x="0" y="250" width="525" height="25" fill="#fafafa"/>
<rect x="525" y="250" width="25" height="25" fill="#f7f7f7"/>
<rect x="550" y="250" width="25" height="25" fill="#f0f0f0"/>
<rect x="575" y="250" width="25" height="25" fill="#f1f1f1"/>
<rect x="600" y="250" width="887" height="25" fill="#fafafa"/>
<rect x="0" y="275" width="25" height="25" fill="#f7f7f7"/>
<rect x="25" y="275" width="25" height="25" fill="#fdfdfd"/>
<rect x="50" y="275" width="25" height="25" fill="#d5d5d5"/>
<rect x="75" y="275" width="25" height="25" fill="#efefef"/>
<rect x="100" y="275" width="25" height="25" fill="#ffffff"/>
<rect x="125" y="275" width="25" height="25" fill="#e3e3e3"/>
<rect x="150" y="275" width="25" height="25" fill="#dfdfdf"/>
<rect x="175" y="275" width="25" height="25" fill="#e2e2e2"/>
<rect x="200" y="275" width="25" height="25" fill="#dedede"/>
<rect x="225" y="275" width="25" height="25" fill="#dfdfdf"/>
<rect x="250" y="275" width="50" height="25" fill="#e0e0e0"/>
<rect x="300" y="275" width="25" height="25" fill="#e2e2e2"/>
<rect x="325" y="275" width="25" height="25" fill="#fcfcfc"/>
<rect x="350" y="275" width="25" height="25" fill="#f1f1f1"/>
<rect x="375" y="275" width="25" height="25" fill="#dddddd"/>
<rect x="400" y="275" width="25" height="25" fill="#dedede"/>
<rect x="425" y="275" width="25" height="25" fill="#e0e0e0"/>
<rect x="450" y="275" width="25" height="25" fill="#e1e1e1"/>
<rect x="475" y="275" width="25" height="25" fill="#dadada"/>
<rect x="500" y="275" width="25" height="25" fill="#f9f9f9"/>
<rect x="525" y="275" width="25" height="25" fill="#e5e5e5"/>
<rect x="550" y="275" width="25" height="25" fill="#d7d7d7"/>
<rect x="575" y="275" width="25" height="25" fill="#d9d9d9"/>
<rect x="600" y="275" width="25" height="25" fill="#f9f9f9"/>
<rect x="625" y="275" width="25" height="25" fill="#ffffff"/>
<rect x="650" y="275" width="25" height="25" fill="#f4f4f4"/>
<rect x="675" y="275" width="25" height="25" fill="#e1e1e1"/>
<rect x="700" y="275" width="25" height="25" fill="#fcfcfc"/>
<rect x="725" y="275" width="50" height="25" fill="#ffffff"/>
<rect x="775" y="275" width="25" height="25" fill="#efefef"/>
<rect x="800" y="275" width="25" height="25" fill="#e0e0e0"/>
<rect x="825" y="275" width="25" height="25" fill="#dddddd"/>
<rect x="850" y="275" width="75" height="25" fill="#ffffff"/>
<rect x="925" y="275" width="25" height="25" fill="#ececec"/>
<rect x="950" y="275" width="25" height="25" fill="#dfdfdf"/>
<rect x="975" y="275" width="25" height="25" fill="#f9f9f9"/>
<rect x="1000" y="275" width="25" height="25" fill="#ffffff"/>
<rect x="1025" y="275" width="25" height="25" fill="#efefef"/>
<rect x="1050" y="275" width="25" height="25" fill="#e0e0e0"/>
<rect x="1075" y="275" width="25" height="25" fill="#dcdcdc"/>
<rect x="1100" y="275" width="25" height="25" fill="#dedede"/>
<rect x="1125" y="275" width="25" height="25" fill="#dfdfdf"/>
<rect x="1150" y="275" width="25" height="25" fill="#ffffff"/>
<rect x="1175" y="275" width="25" height="25" fill="#e1e1e1"/>
<rect x="1200" y="275" width="25" height="25" fill="#e3e3e3"/>
<rect x="1225" y="275" width="25" height="25" fill="#dfdfdf"/>
<rect x="1250" y="275" width="25" height="25" fill="#e4e4e4"/>
<rect x="1275" y="275" width="25" height="25" fill="#dedede"/>
<rect x="1300" y="275" width="25" height="25" fill="#fafafa"/>
<rect x="1325" y="275" width="162" height="25" fill="#ffffff"/>
<rect x="0" y="300" width="50" height="25" fill="#fdfdfd"/>
<rect x="50" y="300" width="25" height="25" fill="#f7f7f7"/>
<rect x="75" y="300" width="25" height="25" fill="#fbfbfb"/>
<rect x="100" y="300" width="25" height="25" fill="#fefefe"/>
<rect x="125" y="300" width="25" height="25" fill="#fafafa"/>
<rect x="150" y="300" width="25" height="25" fill="#f9f9f9"/>
<rect x="175" y="300" width="25" height="25" fill="#fafafa"/>
<rect x="200" y="300" width="125" height="25" fill="#f9f9f9"/>
<rect x="325" y="300" width="25" height="25" fill="#fdfdfd"/>
<rect x="350" y="300" width="25" height="25" fill="#fbfbfb"/>
<rect x="375" y="300" width="50" height="25" fill="#f9f9f9"/>
<rect x="425" y="300" width="50" height="25" fill="#fafafa"/>
<rect x="475" y="300" width="25" height="25" fill="#f9f9f9"/>
<rect x="500" y="300" width="25" height="25" fill="#fdfdfd"/>
<rect x="525" y="300" width="25" height="25" fill="#f5f5f5"/>
<rect x="550" y="300" width="50" height="25" fill="#eeeeee"/>
<rect x="600" y="300" width="25" height="25" fill="#fdfdfd"/>
<rect x="625" y="300" width="25" height="25" fill="#fefefe"/>
<rect x="650" y="300" width="25" height="25" fill="#fcfcfc"/>
<rect x="675" y="300" width="25" height="25" fill="#f9f9f9"/>
<rect x="700" y="300" width="25" height="25" fill="#fdfdfd"/>
<rect x="725" y="300" width="50" height="25" fill="#fefefe"/>
<rect x="775" y="300" width="25" height="25" fill="#fbfbfb"/>
<rect x="800" y="300" width="50" height="25" fill="#f9f9f9"/>
<rect x="850" y="300" width="75" height="25" fill="#fefefe"/>
<rect x="925" y="300" width="25" height="25" fill="#fbfbfb"/>
<rect x="950" y="300" width="25" height="25" fill="#f9f9f9"/>
<rect x="975" y="300" width="25" height="25" fill="#fdfdfd"/>
<rect x="1000" y="300" width="25" height="25" fill="#fefefe"/>
<rect x="1025" y="300" width="25" height="25" fill="#fcfcfc"/>
<rect x="1050" y="300" width="25" height="25" fill="#fafafa"/>
<rect x="1075" y="300" width="75" height="25" fill="#f9f9f9"/>
<rect x="1150" y="300" width="25" height="25" fill="#fefefe"/>
<rect x="1175" y="300" width="25" height="25" fill="#f9f9f9"/>
<rect x="1200" y="300" width="75" height="25" fill="#fafafa"/>
<rect x="1275" y="300" width="25" height="25" fill="#f9f9f9"/>
<rect x="1300" y="300" width="25" height="25" fill="#fdfdfd"/>
<rect x="1325" y="300" width="162" height="25" fill="#fefefe"/>
<rect x="0" y="325" width="25" height="25" fill="#f4f4f4"/>
<rect x="25" y="325" width="25" height="25" fill="#f7f7f7"/>
<rect x="50" y="325" width="25" height="25" fill="#dfdfdf"/>
<rect x="75" y="325" width="25" height="25" fill="#efefef"/>
<rect x="100" y="325" width="25" height="25" fill="#f9f9f9"/>
<rect x="125" y="325" width="25" height="25" fill="#eaeaea"/>
<rect x="150" y="325" width="25" height="25" fill="#e6e6e6"/>
<rect x="175" y="325" width="25" height="25" fill="#e8e8e8"/>
<rect x="200" y="325" width="25" height="25" fill="#e4e4e4"/>
<rect x="225" y="325" width="25" height="25" fill="#e6e6e6"/>
<rect x="250" y="325" width="50" height="25" fill="#e7e7e7"/>
<rect x="300" y="325" width="25" height="25" fill="#e6e6e6"/>
<rect x="325" y="325" width="25" height="25" fill="#f6f6f6"/>
<rect x="350" y="325" width="25" height="25" fill="#f0f0f0"/>
<rect x="375" y="325" width="100" height="25" fill="#e6e6e6"/>
<rect x="475" y="325" width="25" height="25" fill="#e5e5e5"/>
<rect x="500" y="325" width="25" height="25" fill="#f4f4f4"/>
<rect x="525" y="325" width="25" height="25" fill="#e5e5e5"/>
<rect x="550" y="325" width="50" height="25" fill="#dcdcdc"/>
<rect x="600" y="325" width="25" height="25" fill="#f4f4f4"/>
<rect x="625" y="325" width="25" height="25" fill="#f9f9f9"/>
<rect x="650" y="325" width="25" height="25" fill="#f1f1f1"/>
<rect x="675" y="325" width="25" height="25" fill="#e6e6e6"/>
<rect x="700" y="325" width="25" height="25" fill="#f8f8f8"/>
<rect x="725" y="325" width="50" height="25" fill="#f9f9f9"/>
<rect x="775" y="325" width="25" height="25" fill="#eeeeee"/>
<rect x="800" y="325" width="25" height="25" fill="#e6e6e6"/>
<rect x="825" y="325" width="25" height="25" fill="#e3e3e3"/>
<rect x="850" y="325" width="75" height="25" fill="#f9f9f9"/>
<rect x="925" y="325" width="25" height="25" fill="#eeeeee"/>
<rect x="950" y="325" width="25" height="25" fill="#e5e5e5"/>
<rect x="975" y="325" width="25" height="25" fill="#f4f4f4"/>
<rect x="1000" y="325" width="25" height="25" fill="#f9f9f9"/>
<rect x="1025" y="325" width="25" height="25" fill="#f1f1f1"/>
<rect x="1050" y="325" width="25" height="25" fill="#e6e6e6"/>
<rect x="1075" y="325" width="50" height="25" fill="#e4e4e4"/>
<rect x="1125" y="325" width="25" height="25" fill="#e6e6e6"/>
<rect x="1150" y="325" width="25" height="25" fill="#f9f9f9"/>
<rect x="1175" y="325" width="75" height="25" fill="#e7e7e7"/>
<rect x="1250" y="325" width="25" height="25" fill="#e9e9e9"/>
<rect x="1275" y="325" width="25" height="25" fill="#e7e7e7"/>
<rect x="1300" y="325" width="25" height="25" fill="#f6f6f6"/>
<rect x="1325" y="325" width="162" height="25" fill="#f9f9f9"/>
<rect x="0" y="350" width="25" height="25" fill="#f5f5f5"/>
<rect x="25" y="350" width="25" height="25" fill="#f8f8f8"/>
<rect x="50" y="350" width="25" height="25" fill="#e3e3e3"/>
<rect x="75" y="350" width="25" height="25" fill="#f0f0f0"/>
<rect x="100" y="350" width="25" height="25" fill="#f9f9f9"/>
<rect x="125" y="350" width="25" height="25" fill="#ebebeb"/>
<rect x="150" y="350" width="25" height="25" fill="#e8e8e8"/>
<rect x="175" y="350" width="25" height="25" fill="#ebebeb"/>
<rect x="200" y="350" width="25" height="25" fill="#e6e6e6"/>
<rect x="225" y="350" width="25" height="25" fill="#e7e7e7"/>
<rect x="250" y="350" width="25" height="25" fill="#e9e9e9"/>
<rect x="275" y="350" width="25" height="25" fill="#e8e8e8"/>
<rect x="300" y="350" width="25" height="25" fill="#e9e9e9"/>
<rect x="325" y="350" width="25" height="25" fill="#f6f6f6"/>
<rect x="350" y="350" width="25" height="25" fill="#f2f2f2"/>
<rect x="375" y="350" width="25" height="25" fill="#e8e8e8"/>
<rect x="400" y="350" width="25" height="25" fill="#e9e9e9"/>
<rect x="425" y="350" width="25" height="25" fill="#e7e7e7"/>
<rect x="450" y="350" width="25" height="25" fill="#e8e8e8"/>
<rect x="475" y="350" width="25" height="25" fill="#e7e7e7"/>
<rect x="500" y="350" width="25" height="25" fill="#f6f6f6"/>
<rect x="525" y="350" width="25" height="25" fill="#eaeaea"/>
<rect x="550" y="350" width="25" height="25" fill="#dedede"/>
<rect x="575" y="350" width="25" height="25" fill="#dfdfdf"/>
<rect x="600" y="350" width="25" height="25" fill="#f7f7f7"/>
<rect x="625" y="350" width="25" height="25" fill="#f9f9f9"/>
<rect x="650" y="350" width="25" height="25" fill="#f3f3f3"/>
<rect x="675" y="350" width="25" height="25" fill="#e8e8e8"/>
<rect x="700" y="350" width="25" height="25" fill="#f8f8f8"/>
<rect x="725" y="350" width="50" height="25" fill="#f9f9f9"/>
<rect x="775" y="350" width="25" height="25" fill="#f1f1f1"/>
<rect x="800" y="350" width="25" height="25" fill="#e6e6e6"/>
<rect x="825" y="350" width="25" height="25" fill="#e5e5e5"/>
<rect x="850" y="350" width="75" height="25" fill="#f9f9f9"/>
<rect x="925" y="350" width="25" height="25" fill="#eeeeee"/>
<rect x="950" y="350" width="25" height="25" fill="#e7e7e7"/>
<rect x="975" y="350" width="25" height="25" fill="#f5f5f5"/>
<rect x="1000" y="350" width="25" height="25" fill="#f9f9f9"/>
<rect x="1025" y="350" width="25" height="25" fill="#f0f0f0"/>
<rect x="1050" y="350" width="25" height="25" fill="#e9e9e9"/>
<rect x="1075" y="350" width="25" height="25" fill="#e7e7e7"/>
<rect x="1100" y="350" width="25" height="25" fill="#e9e9e9"/>
<rect x="1125" y="350" width="25" height="25" fill="#e8e8e8"/>
<rect x="1150" y="350" width="25" height="25" fill="#f9f9f9"/>
<rect x="1175" y="350" width="75" height="25" fill="#e9e9e9"/>
<rect x="1250" y="350" width="25" height="25" fill="#ebebeb"/>
<rect x="1275" y="350" width="25" height="25" fill="#e9e9e9"/>
<rect x="1300" y="350" width="25" height="25" fill="#f6f6f6"/>
<rect x="1325" y="350" width="162" height="25" fill="#f9f9f9"/>
<rect x="0" y="375" width="50" height="25" fill="#fdfdfd"/>
<rect x="50" y="375" width="25" height="25" fill="#f5f5f5"/>
<rect x="75" y="375" width="25" height="25" fill="#fafafa"/>
<rect x="100" y="375" width="25" height="25" fill="#fefefe"/>
<rect x="125" y="375" width="25" height="25" fill="#f8f8f8"/>
<rect x="150" y="375" width="25" height="25" fill="#f7f7f7"/>
<rect x="175" y="375" width="25" height="25" fill="#f8f8f8"/>
<rect x="200" y="375" width="100" height="25" fill="#f7f7f7"/>
<rect x="300" y="375" width="25" height="25" fill="#f8f8f8"/>
<rect x="325" y="375" width="25" height="25" fill="#fefefe"/>
<rect x="350" y="375" width="25" height="25" fill="#fbfbfb"/>
<rect x="375" y="375" width="50" height="25" fill="#f7f7f7"/>
<rect x="425" y="375" width="25" height="25" fill="#f8f8f8"/>
<rect x="450" y="375" width="25" height="25" fill="#f7f7f7"/>
<rect x="475" y="375" width="25" height="25" fill="#f6f6f6"/>
<rect x="500" y="375" width="25" height="25" fill="#fdfdfd"/>
<rect x="525" y="375" width="25" height="25" fill="#f5f5f5"/>
<rect x="550" y="375" width="50" height="25" fill="#eeeeee"/>
<rect x="600" y="375" width="25" height="25" fill="#fdfdfd"/>
<rect x="625" y="375" width="25" height="25" fill="#fefefe"/>
<rect x="650" y="375" width="25" height="25" fill="#fbfbfb"/>
<rect x="675" y="375" width="25" height="25" fill="#f7f7f7"/>
<rect x="700" y="375" width="25" height="25" fill="#fdfdfd"/>
<rect x="725" y="375" width="50" height="25" fill="#fefefe"/>
<rect x="775" y="375" width="25" height="25" fill="#fbfbfb"/>
<rect x="800" y="375" width="25" height="25" fill="#f7f7f7"/>
<rect x="825" y="375" width="25" height="25" fill="#f6f6f6"/>
<rect x="850" y="375" width="75" height="25" fill="#fefefe"/>
<rect x="925" y="375" width="25" height="25" fill="#fafafa"/>
<rect x="950" y="375" width="25" height="25" fill="#f7f7f7"/>
<rect x="975" y="375" width="25" height="25" fill="#fdfdfd"/>
<rect x="1000" y="375" width="25" height="25" fill="#fefefe"/>
<rect x="1025" y="375" width="25" height="25" fill="#fbfbfb"/>
<rect x="1050" y="375" width="100" height="25" fill="#f7f7f7"/>
<rect x="1150" y="375" width="25" height="25" fill="#fefefe"/>
<rect x="1175" y="375" width="25" height="25" fill="#f7f7f7"/>
<rect x="1200" y="375" width="75" height="25" fill="#f8f8f8"/>
<rect x="1275" y="375" width="25" height="25" fill="#f7f7f7"/>
<rect x="1300" y="375" width="25" height="25" fill="#fdfdfd"/>
<rect x="1325" y="375" width="162" height="25" fill="#fefefe"/>
<rect x="0" y="400" width="25" height="25" fill="#f6f6f6"/>
<rect x="25" y="400" width="25" height="25" fill="#fbfbfb"/>
<rect x="50" y="400" width="25" height="25" fill="#d5d5d5"/>
<rect x="75" y="400" width="25" height="25" fill="#f0f0f0"/>
<rect x="100" y="400" width="25" height="25" fill="#ffffff"/>
<rect x="125" y="400" width="25" height="25" fill="#e8e8e8"/>
<rect x="150" y="400" width="25" height="25" fill="#e2e2e2"/>
<rect x="175" y="400" width="25" height="25" fill="#e3e3e3"/>
<rect x="200" y="400" width="50" height="25" fill="#e0e0e0"/>
<rect x="250" y="400" width="25" height="25" fill="#e4e4e4"/>
<rect x="275" y="400" width="25" height="25" fill="#e3e3e3"/>
<rect x="300" y="400" width="25" height="25" fill="#e1e1e1"/>
<rect x="325" y="400" width="25" height="25" fill="#fafafa"/>
<rect x="350" y="400" width="25" height="25" fill="#f0f0f0"/>
<rect x="375" y="400" width="25" height="25" fill="#dfdfdf"/>
<rect x="400" y="400" width="25" height="25" fill="#e3e3e3"/>
<rect x="425" y="400" width="50" height="25" fill="#e4e4e4"/>
<rect x="475" y="400" width="25" height="25" fill="#dfdfdf"/>
<rect x="500" y="400" width="25" height="25" fill="#f8f8f8"/>
<rect x="525" y="400" width="25" height="25" fill="#e2e2e2"/>
<rect x="550" y="400" width="25" height="25" fill="#d8d8d8"/>
<rect x="575" y="400" width="25" height="25" fill="#dbdbdb"/>
<rect x="600" y="400" width="25" height="25" fill="#fcfcfc"/>
<rect x="625" y="400" width="25" height="25" fill="#ffffff"/>
<rect x="650" y="400" width="25" height="25" fill="#f0f0f0"/>
<rect x="675" y="400" width="25" height="25" fill="#e4e4e4"/>
<rect x="700" y="400" width="25" height="25" fill="#fbfbfb"/>
<rect x="725" y="400" width="50" height="25" fill="#ffffff"/>
<rect x="775" y="400" width="25" height="25" fill="#efefef"/>
<rect x="800" y="400" width="25" height="25" fill="#e1e1e1"/>
<rect x="825" y="400" width="25" height="25" fill="#dfdfdf"/>
<rect x="850" y="400" width="75" height="25" fill="#ffffff"/>
<rect x="925" y="400" width="25" height="25" fill="#ededed"/>
<rect x="950" y="400" width="25" height="25" fill="#e0e0e0"/>
<rect x="975" y="400" width="25" height="25" fill="#f9f9f9"/>
<rect x="1000" y="400" width="25" height="25" fill="#ffffff"/>
<rect x="1025" y="400" width="25" height="25" fill="#f2f2f2"/>
<rect x="1050" y="400" width="25" height="25" fill="#e5e5e5"/>
<rect x="1075" y="400" width="25" height="25" fill="#e0e0e0"/>
<rect x="1100" y="400" width="25" height="25" fill="#e1e1e1"/>
<rect x="1125" y="400" width="25" height="25" fill="#e4e4e4"/>
<rect x="1150" y="400" width="25" height="25" fill="#ffffff"/>
<rect x="1175" y="400" width="50" height="25" fill="#e4e4e4"/>
<rect x="1225" y="400" width="25" height="25" fill="#e5e5e5"/>
<rect x="1250" y="400" width="25" height="25" fill="#e6e6e6"/>
<rect x="1275" y="400" width="25" height="25" fill="#e2e2e2"/>
<rect x="1300" y="400" width="25" height="25" fill="#f9f9f9"/>
<rect x="1325" y="400" width="162" height="25" fill="#ffffff"/>
<rect x="0" y="425" width="525" height="25" fill="#fafafa"/>
<rect x="525" y="425" width="25" height="25" fill="#f5f5f5"/>
<rect x="550" y="425" width="25" height="25" fill="#eeeeee"/>
<rect x="575" y="425" width="25" height="25" fill="#efefef"/>
<rect x="600" y="425" width="887" height="25" fill="#fafafa"/>
<rect x="0" y="450" width="25" height="25" fill="#f2f2f2"/>
<rect x="25" y="450" width="25" height="25" fill="#f7f7f7"/>
<rect x="50" y="450" width="25" height="25" fill="#c5c5c5"/>
<rect x="75" y="450" width="25" height="25" fill="#e3e3e3"/>
<rect x="100" y="450" width="25" height="25" fill="#f9f9f9"/>
<rect x="125" y="450" width="25" height="25" fill="#dcdcdc"/>
<rect x="150" y="450" width="50" height="25" fill="#d9d9d9"/>
<rect x="200" y="450" width="25" height="25" fill="#d2d2d2"/>
<rect x="225" y="450" width="25" height="25" fill="#d4d4d4"/>
<rect x="250" y="450" width="25" height="25" fill="#d6d6d6"/>
<rect x="275" y="450" width="25" height="25" fill="#d5d5d5"/>
<rect x="300" y="450" width="25" height="25" fill="#d4d4d4"/>
<rect x="325" y="450" width="25" height="25" fill="#f6f6f6"/>
<rect x="350" y="450" width="25" height="25" fill="#ebebeb"/>
<rect x="375" y="450" width="25" height="25" fill="#d5d5d5"/>
<rect x="400" y="450" width="25" height="25" fill="#d6d6d6"/>
<rect x="425" y="450" width="25" height="25" fill="#d5d5d5"/>
<rect x="450" y="450" width="25" height="25" fill="#d7d7d7"/>
<rect x="475" y="450" width="25" height="25" fill="#d0d0d0"/>
<rect x="500" y="450" width="25" height="25" fill="#f0f0f0"/>
<rect x="525" y="450" width="25" height="25" fill="#dbdbdb"/>
<rect x="550" y="450" width="25" height="25" fill="#cbcbcb"/>
<rect x="575" y="450" width="25" height="25" fill="#cecece"/>
<rect x="600" y="450" width="25" height="25" fill="#f4f4f4"/>
<rect x="625" y="450" width="25" height="25" fill="#f9f9f9"/>
<rect x="650" y="450" width="25" height="25" fill="#dfdfdf"/>
<rect x="675" y="450" width="25" height="25" fill="#cecece"/>
<rect x="700" y="450" width="25" height="25" fill="#ececec"/>
<rect x="725" y="450" width="50" height="25" fill="#f9f9f9"/>
<rect x="775" y="450" width="25" height="25" fill="#e6e6e6"/>
<rect x="800" y="450" width="25" height="25" fill="#d5d5d5"/>
<rect x="825" y="450" width="25" height="25" fill="#d1d1d1"/>
<rect x="850" y="450" width="75" height="25" fill="#f9f9f9"/>
<rect x="925" y="450" width="25" height="25" fill="#e3e3e3"/>
<rect x="950" y="450" width="25" height="25" fill="#cacaca"/>
<rect x="975" y="450" width="25" height="25" fill="#f0f0f0"/>
<rect x="1000" y="450" width="25" height="25" fill="#f9f9f9"/>
<rect x="1025" y="450" width="25" height="25" fill="#e9e9e9"/>
<rect x="1050" y="450" width="25" height="25" fill="#d7d7d7"/>
<rect x="1075" y="450" width="25" height="25" fill="#d4d4d4"/>
<rect x="1100" y="450" width="25" height="25" fill="#d2d2d2"/>
<rect x="1125" y="450" width="25" height="25" fill="#d9d9d9"/>
<rect x="1150" y="450" width="25" height="25" fill="#f9f9f9"/>
<rect x="1175" y="450" width="25" height="25" fill="#d9d9d9"/>
<rect x="1200" y="450" width="25" height="25" fill="#dbdbdb"/>
<rect x="1225" y="450" width="50" height="25" fill="#d7d7d7"/>
<rect x="1275" y="450" width="25" height="25" fill="#d3d3d3"/>
<rect x="1300" y="450" width="25" height="25" fill="#e5e5e5"/>
<rect x="1325" y="450" width="162" height="25" fill="#f9f9f9"/>
<rect x="0" y="475" width="525" height="25" fill="#fcfcfc"/>
<rect x="525" y="475" width="25" height="25" fill="#f5f5f5"/>
<rect x="550" y="475" width="25" height="25" fill="#efefef"/>
<rect x="575" y="475" width="25" height="25" fill="#f1f1f1"/>
<rect x="600" y="475" width="887" height="25" fill="#fcfcfc"/>
<rect x="0" y="500" width="25" height="25" fill="#f8f8f8"/>
<rect x="25" y="500" width="25" height="25" fill="#fafafa"/>
<rect x="50" y="500" width="25" height="25" fill="#cccccc"/>
<rect x="75" y="500" width="25" height="25" fill="#ededed"/>
<rect x="100" y="500" width="25" height="25" fill="#ffffff"/>
<rect x="125" y="500" width="25" height="25" fill="#e0e0e0"/>
<rect x="150" y="500" width="25" height="25" fill="#dddddd"/>
<rect x="175" y="500" width="25" height="25" fill="#dfdfdf"/>
<rect x="200" y="500" width="25" height="25" fill="#d9d9d9"/>
<rect x="225" y="500" width="25" height="25" fill="#dbdbdb"/>
<rect x="250" y="500" width="75" height="25" fill="#dddddd"/>
<rect x="325" y="500" width="25" height="25" fill="#f8f8f8"/>
<rect x="350" y="500" width="25" height="25" fill="#f0f0f0"/>
<rect x="375" y="500" width="25" height="25" fill="#d8d8d8"/>
<rect x="400" y="500" width="25" height="25" fill="#dddddd"/>
<rect x="425" y="500" width="25" height="25" fill="#dcdcdc"/>
<rect x="450" y="500" width="25" height="25" fill="#dadada"/>
<rect x="475" y="500" width="25" height="25" fill="#d6d6d6"/>
<rect x="500" y="500" width="25" height="25" fill="#f8f8f8"/>
<rect x="525" y="500" width="25" height="25" fill="#e2e2e2"/>
<rect x="550" y="500" width="25" height="25" fill="#d2d2d2"/>
<rect x="575" y="500" width="25" height="25" fill="#d7d7d7"/>
<rect x="600" y="500" width="25" height="25" fill="#f7f7f7"/>
<rect x="625" y="500" width="25" height="25" fill="#ffffff"/>
<rect x="650" y="500" width="25" height="25" fill="#f0f0f0"/>
<rect x="675" y="500" width="25" height="25" fill="#d6d6d6"/>
<rect x="700" y="500" width="25" height="25" fill="#fafafa"/>
<rect x="725" y="500" width="50" height="25" fill="#ffffff"/>
<rect x="775" y="500" width="25" height="25" fill="#ebebeb"/>
<rect x="800" y="500" width="25" height="25" fill="#dcdcdc"/>
<rect x="825" y="500" width="25" height="25" fill="#d8d8d8"/>
<rect x="850" y="500" width="75" height="25" fill="#ffffff"/>
<rect x="925" y="500" width="25" height="25" fill="#eaeaea"/>
<rect x="950" y="500" width="25" height="25" fill="#d7d7d7"/>
<rect x="975" y="500" width="25" height="25" fill="#fafafa"/>
<rect x="1000" y="500" width="25" height="25" fill="#ffffff"/>
<rect x="1025" y="500" width="25" height="25" fill="#ececec"/>
<rect x="1050" y="500" width="25" height="25" fill="#dbdbdb"/>
<rect x="1075" y="500" width="25" height="25" fill="#d9d9d9"/>
<rect x="1100" y="500" width="25" height="25" fill="#dcdcdc"/>
<rect x="1125" y="500" width="25" height="25" fill="#dadada"/>
<rect x="1150" y="500" width="25" height="25" fill="#ffffff"/>
<rect x="1175" y="500" width="25" height="25" fill="#dcdcdc"/>
<rect x="1200" y="500" width="25" height="25" fill="#e0e0e0"/>
<rect x="1225" y="500" width="25" height="25" fill="#dcdcdc"/>
<rect x="1250" y="500" width="25" height="25" fill="#e0e0e0"/>
<rect x="1275" y="500" width="25" height="25" fill="#dcdcdc"/>
<rect x="1300" y="500" width="25" height="25" fill="#fcfcfc"/>
<rect x="1325" y="500" width="162" height="25" fill="#ffffff"/>
<rect x="0" y="525" width="525" height="25" fill="#fcfcfc"/>
<rect x="525" y="525" width="25" height="25" fill="#f7f7f7"/>
<rect x="550" y="525" width="25" height="25" fill="#f0f0f0"/>
<rect x="575" y="525" width="25" height="25" fill="#f1f1f1"/>
<rect x="600" y="525" width="887" height="25" fill="#fcfcfc"/>
<rect x="0" y="550" width="25" height="25" fill="#f0f0f0"/>
<rect x="25" y="550" width="25" height="25" fill="#f8f8f8"/>
<rect x="50" y="550" width="25" height="25" fill="#cecece"/>
<rect x="75" y="550" width="25" height="25" fill="#e7e7e7"/>
<rect x="100" y="550" width="25" height="25" fill="#f9f9f9"/>
<rect x="125" y="550" width="25" height="25" fill="#dcdcdc"/>
<rect x="150" y="550" width="25" height="25" fill="#d9d9d9"/>
<rect x="175" y="550" width="25" height="25" fill="#dddddd"/>
<rect x="200" y="550" width="50" height="25" fill="#d8d8d8"/>
<rect x="250" y="550" width="25" height="25" fill="#d9d9d9"/>
<rect x="275" y="550" width="25" height="25" fill="#d8d8d8"/>
<rect x="300" y="550" width="25" height="25" fill="#dcdcdc"/>
<rect x="325" y="550" width="25" height="25" fill="#f4f4f4"/>
<rect x="350" y="550" width="25" height="25" fill="#e9e9e9"/>
<rect x="375" y="550" width="25" height="25" fill="#d7d7d7"/>
<rect x="400" y="550" width="50" height="25" fill="#d9d9d9"/>
<rect x="450" y="550" width="25" height="25" fill="#dbdbdb"/>
<rect x="475" y="550" width="25" height="25" fill="#d7d7d7"/>
<rect x="500" y="550" width="25" height="25" fill="#f3f3f3"/>
<rect x="525" y="550" width="25" height="25" fill="#dddddd"/>
<rect x="550" y="550" width="25" height="25" fill="#d1d1d1"/>
<rect x="575" y="550" width="25" height="25" fill="#d5d5d5"/>
<rect x="600" y="550" width="25" height="25" fill="#f6f6f6"/>
<rect x="625" y="550" width="25" height="25" fill="#f9f9f9"/>
<rect x="650" y="550" width="25" height="25" fill="#f7f7f7"/>
<rect x="675" y="550" width="25" height="25" fill="#e2e2e2"/>
<rect x="700" y="550" width="25" height="25" fill="#f5f5f5"/>
<rect x="725" y="550" width="50" height="25" fill="#f9f9f9"/>
<rect x="775" y="550" width="25" height="25" fill="#e7e7e7"/>
<rect x="800" y="550" width="25" height="25" fill="#d6d6d6"/>
<rect x="825" y="550" width="25" height="25" fill="#d5d5d5"/>
<rect x="850" y="550" width="75" height="25" fill="#f9f9f9"/>
<rect x="925" y="550" width="25" height="25" fill="#f2f2f2"/>
<rect x="950" y="550" width="25" height="25" fill="#e7e7e7"/>
<rect x="975" y="550" width="25" height="25" fill="#f4f4f4"/>
<rect x="1000" y="550" width="25" height="25" fill="#f9f9f9"/>
<rect x="1025" y="550" width="25" height="25" fill="#e8e8e8"/>
<rect x="1050" y="550" width="25" height="25" fill="#dbdbdb"/>
<rect x="1075" y="550" width="25" height="25" fill="#d8d8d8"/>
<rect x="1100" y="550" width="25" height="25" fill="#d9d9d9"/>
<rect x="1125" y="550" width="25" height="25" fill="#dadada"/>
<rect x="1150" y="550" width="25" height="25" fill="#f9f9f9"/>
<rect x="1175" y="550" width="25" height="25" fill="#dadada"/>
<rect x="1200" y="550" width="25" height="25" fill="#dbdbdb"/>
<rect x="1225" y="550" width="25" height="25" fill="#d9d9d9"/>
<rect x="1250" y="550" width="25" height="25" fill="#dcdcdc"/>
<rect x="1275" y="550" width="25" height="25" fill="#dbdbdb"/>
<rect x="1300" y="550" width="25" height="25" fill="#f3f3f3"/>
<rect x="1325" y="550" width="162" height="25" fill="#f9f9f9"/>
<rect x="0" y="575" width="25" height="25" fill="#f8f8f8"/>
<rect x="25" y="575" width="25" height="25" fill="#f9f9f9"/>
<rect x="50" y="575" width="25" height="25" fill="#f3f3f3"/>
<rect x="75" y="575" width="25" height="25" fill="#f7f7f7"/>
<rect x="100" y="575" width="25" height="25" fill="#f9f9f9"/>
<rect x="125" y="575" width="25" height="25" fill="#f6f6f6"/>
<rect x="150" y="575" width="25" height="25" fill="#f5f5f5"/>
<rect x="175" y="575" width="25" height="25" fill="#f6f6f6"/>
<rect x="200" y="575" width="125" height="25" fill="#f5f5f5"/>
<rect x="325" y="575" width="25" height="25" fill="#f8f8f8"/>
<rect x="350" y="575" width="25" height="25" fill="#f7f7f7"/>
<rect x="375" y="575" width="125" height="25" fill="#f5f5f5"/>
<rect x="500" y="575" width="25" height="25" fill="#f8f8f8"/>
<rect x="525" y="575" width="25" height="25" fill="#f0f0f0"/>
<rect x="550" y="575" width="25" height="25" fill="#ebebeb"/>
<rect x="575" y="575" width="25" height="25" fill="#ececec"/>
<rect x="600" y="575" width="75" height="25" fill="#f9f9f9"/>
<rect x="675" y="575" width="25" height="25" fill="#f6f6f6"/>
<rect x="700" y="575" width="75" height="25" fill="#f9f9f9"/>
<rect x="775" y="575" width="25" height="25" fill="#f7f7f7"/>
<rect x="800" y="575" width="25" height="25" fill="#f5f5f5"/>
<rect x="825" y="575" width="25" height="25" fill="#f4f4f4"/>
<rect x="850" y="575" width="75" height="25" fill="#f9f9f9"/>
<rect x="925" y="575" width="25" height="25" fill="#f8f8f8"/>
<rect x="950" y="575" width="25" height="25" fill="#f6f6f6"/>
<rect x="975" y="575" width="25" height="25" fill="#f8f8f8"/>
<rect x="1000" y="575" width="25" height="25" fill="#f9f9f9"/>
<rect x="1025" y="575" width="25" height="25" fill="#f7f7f7"/>
<rect x="1050" y="575" width="100" height="25" fill="#f5f5f5"/>
<rect x="1150" y="575" width="25" height="25" fill="#f9f9f9"/>
<rect x="1175" y="575" width="25" height="25" fill="#f5f5f5"/>
<rect x="1200" y="575" width="25" height="25" fill="#f6f6f6"/>
<rect x="1225" y="575" width="75" height="25" fill="#f5f5f5"/>
<rect x="1300" y="575" width="187" height="25" fill="#f9f9f9"/>
<rect x="0" y="600" width="25" height="25" fill="#fcfcfc"/>
<rect x="25" y="600" width="25" height="25" fill="#fefefe"/>
<rect x="50" y="600" width="25" height="25" fill="#e4e4e4"/>
<rect x="75" y="600" width="25" height="25" fill="#f5f5f5"/>
<rect x="100" y="600" width="25" height="25" fill="#ffffff"/>
<rect x="125" y="600" width="25" height="25" fill="#efefef"/>
<rect x="150" y="600" width="50" height="25" fill="#ededed"/>
<rect x="200" y="600" width="25" height="25" fill="#eaeaea"/>
<rect x="225" y="600" width="25" height="25" fill="#ececec"/>
<rect x="250" y="600" width="25" height="25" fill="#ededed"/>
<rect x="275" y="600" width="25" height="25" fill="#ececec"/>
<rect x="300" y="600" width="25" height="25" fill="#ededed"/>
<rect x="325" y="600" width="25" height="25" fill="#fcfcfc"/>
<rect x="350" y="600" width="25" height="25" fill="#f7f7f7"/>
<rect x="375" y="600" width="75" height="25" fill="#ececec"/>
<rect x="450" y="600" width="25" height="25" fill="#ededed"/>
<rect x="475" y="600" width="25" height="25" fill="#eaeaea"/>
<rect x="500" y="600" width="25" height="25" fill="#fafafa"/>
<rect x="525" y="600" width="25" height="25" fill="#ececec"/>
<rect x="550" y="600" width="25" height="25" fill="#e3e3e3"/>
<rect x="575" y="600" width="25" height="25" fill="#e1e1e1"/>
<rect x="600" y="600" width="25" height="25" fill="#fcfcfc"/>
<rect x="625" y="600" width="25" height="25" fill="#ffffff"/>
<rect x="650" y="600" width="25" height="25" fill="#fefefe"/>
<rect x="675" y="600" width="25" height="25" fill="#e9e9e9"/>
<rect x="700" y="600" width="75" height="25" fill="#ffffff"/>
<rect x="775" y="600" width="25" height="25" fill="#f6f6f6"/>
<rect x="800" y="600" width="25" height="25" fill="#eaeaea"/>
<rect x="825" y="600" width="25" height="25" fill="#e9e9e9"/>
<rect x="850" y="600" width="75" height="25" fill="#ffffff"/>
<rect x="925" y="600" width="25" height="25" fill="#fbfbfb"/>
<rect x="950" y="600" width="25" height="25" fill="#efefef"/>
<rect x="975" y="600" width="25" height="25" fill="#fbfbfb"/>
<rect x="1000" y="600" width="25" height="25" fill="#ffffff"/>
<rect x="1025" y="600" width="25" height="25" fill="#f6f6f6"/>
<rect x="1050" y="600" width="25" height="25" fill="#eeeeee"/>
<rect x="1075" y="600" width="25" height="25" fill="#ececec"/>
<rect x="1100" y="600" width="25" height="25" fill="#ebebeb"/>
<rect x="1125" y="600" width="25" height="25" fill="#ececec"/>
<rect x="1150" y="600" width="25" height="25" fill="#ffffff"/>
<rect x="1175" y="600" width="25" height="25" fill="#ececec"/>
<rect x="1200" y="600" width="25" height="25" fill="#efefef"/>
<rect x="1225" y="600" width="25" height="25" fill="#ececec"/>
<rect x="1250" y="600" width="25" height="25" fill="#eeeeee"/>
<rect x="1275" y="600" width="25" height="25" fill="#ececec"/>
<rect x="1300" y="600" width="25" height="25" fill="#fdfdfd"/>
<rect x="1325" y="600" width="162" height="25" fill="#ffffff"/>
<rect x="0" y="625" width="25" height="25" fill="#fcfcfc"/>
<rect x="25" y="625" width="25" height="25" fill="#fdfdfd"/>
<rect x="50" y="625" width="25" height="25" fill="#e7e7e7"/>
<rect x="75" y="625" width="25" height="25" fill="#f6f6f6"/>
<rect x="100" y="625" width="25" height="25" fill="#ffffff"/>
<rect x="125" y="625" width="25" height="25" fill="#f1f1f1"/>
<rect x="150" y="625" width="25" height="25" fill="#eeeeee"/>
<rect x="175" y="625" width="25" height="25" fill="#efefef"/>
<rect x="200" y="625" width="50" height="25" fill="#eeeeee"/>
<rect x="250" y="625" width="50" height="25" fill="#ededed"/>
<rect x="300" y="625" width="25" height="25" fill="#efefef"/>
<rect x="325" y="625" width="25" height="25" fill="#fefefe"/>
<rect x="350" y="625" width="25" height="25" fill="#f6f6f6"/>
<rect x="375" y="625" width="100" height="25" fill="#eeeeee"/>
<rect x="475" y="625" width="25" height="25" fill="#ededed"/>
<rect x="500" y="625" width="25" height="25" fill="#fbfbfb"/>
<rect x="525" y="625" width="25" height="25" fill="#efefef"/>
<rect x="550" y="625" width="25" height="25" fill="#e3e3e3"/>
<rect x="575" y="625" width="25" height="25" fill="#e7e7e7"/>
<rect x="600" y="625" width="25" height="25" fill="#fcfcfc"/>
<rect x="625" y="625" width="25" height="25" fill="#ffffff"/>
<rect x="650" y="625" width="25" height="25" fill="#fdfdfd"/>
<rect x="675" y="625" width="25" height="25" fill="#ededed"/>
<rect x="700" y="625" width="75" height="25" fill="#ffffff"/>
<rect x="775" y="625" width="25" height="25" fill="#f7f7f7"/>
<rect x="800" y="625" width="25" height="25" fill="#ededed"/>
<rect x="825" y="625" width="25" height="25" fill="#ebebeb"/>
<rect x="850" y="625" width="75" height="25" fill="#ffffff"/>
<rect x="925" y="625" width="25" height="25" fill="#fdfdfd"/>
<rect x="950" y="625" width="25" height="25" fill="#f0f0f0"/>
<rect x="975" y="625" width="25" height="25" fill="#fbfbfb"/>
<rect x="1000" y="625" width="25" height="25" fill="#ffffff"/>
<rect x="1025" y="625" width="25" height="25" fill="#f8f8f8"/>
<rect x="1050" y="625" width="75" height="25" fill="#eeeeee"/>
<rect x="1125" y="625" width="25" height="25" fill="#efefef"/>
<rect x="1150" y="625" width="25" height="25" fill="#ffffff"/>
<rect x="1175" y="625" width="25" height="25" fill="#efefef"/>
<rect x="1200" y="625" width="25" height="25" fill="#f0f0f0"/>
<rect x="1225" y="625" width="25" height="25" fill="#efefef"/>
<rect x="1250" y="625" width="25" height="25" fill="#f0f0f0"/>
<rect x="1275" y="625" width="25" height="25" fill="#eeeeee"/>
<rect x="1300" y="625" width="25" height="25" fill="#fcfcfc"/>
<rect x="1325" y="625" width="162" height="25" fill="#ffffff"/>
<rect x="0" y="650" width="25" height="25" fill="#f7f7f7"/>
<rect x="25" y="650" width="25" height="25" fill="#f8f8f8"/>
<rect x="50" y="650" width="25" height="25" fill="#f0f0f0"/>
<rect x="75" y="650" width="25" height="25" fill="#f5f5f5"/>
<rect x="100" y="650" width="25" height="25" fill="#f9f9f9"/>
<rect x="125" y="650" width="50" height="25" fill="#f3f3f3"/>
<rect x="175" y="650" width="25" height="25" fill="#f2f2f2"/>
<rect x="200" y="650" width="25" height="25" fill="#f1f1f1"/>
<rect x="225" y="650" width="75" height="25" fill="#f2f2f2"/>
<rect x="300" y="650" width="25" height="25" fill="#f3f3f3"/>
<rect x="325" y="650" width="25" height="25" fill="#f8f8f8"/>
<rect x="350" y="650" width="25" height="25" fill="#f6f6f6"/>
<rect x="375" y="650" width="75" height="25" fill="#f2f2f2"/>
<rect x="450" y="650" width="25" height="25" fill="#f3f3f3"/>
<rect x="475" y="650" width="25" height="25" fill="#f1f1f1"/>
<rect x="500" y="650" width="25" height="25" fill="#f8f8f8"/>
<rect x="525" y="650" width="25" height="25" fill="#eeeeee"/>
<rect x="550" y="650" width="25" height="25" fill="#e9e9e9"/>
<rect x="575" y="650" width="25" height="25" fill="#e8e8e8"/>
<rect x="600" y="650" width="25" height="25" fill="#f7f7f7"/>
<rect x="625" y="650" width="25" height="25" fill="#f9f9f9"/>
<rect x="650" y="650" width="25" height="25" fill="#f7f7f7"/>
<rect x="675" y="650" width="25" height="25" fill="#f1f1f1"/>
<rect x="700" y="650" width="25" height="25" fill="#f8f8f8"/>
<rect x="725" y="650" width="50" height="25" fill="#f9f9f9"/>
<rect x="775" y="650" width="25" height="25" fill="#f5f5f5"/>
<rect x="800" y="650" width="50" height="25" fill="#f1f1f1"/>
<rect x="850" y="650" width="75" height="25" fill="#f9f9f9"/>
<rect x="925" y="650" width="25" height="25" fill="#f4f4f4"/>
<rect x="950" y="650" width="25" height="25" fill="#f2f2f2"/>
<rect x="975" y="650" width="25" height="25" fill="#f7f7f7"/>
<rect x="1000" y="650" width="25" height="25" fill="#f9f9f9"/>
<rect x="1025" y="650" width="25" height="25" fill="#f5f5f5"/>
<rect x="1050" y="650" width="25" height="25" fill="#f3f3f3"/>
<rect x="1075" y="650" width="25" height="25" fill="#f1f1f1"/>
<rect x="1100" y="650" width="25" height="25" fill="#f2f2f2"/>
<rect x="1125" y="650" width="25" height="25" fill="#f3f3f3"/>
<rect x="1150" y="650" width="25" height="25" fill="#f9f9f9"/>
<rect x="1175" y="650" width="75" height="25" fill="#f3f3f3"/>
<rect x="1250" y="650" width="50" height="25" fill="#f2f2f2"/>
<rect x="1300" y="650" width="25" height="25" fill="#f8f8f8"/>
<rect x="1325" y="650" width="162" height="25" fill="#f9f9f9"/>
<rect x="0" y="675" width="25" height="25" fill="#f4f4f4"/>
<rect x="25" y="675" width="25" height="25" fill="#f6f6f6"/>
<rect x="50" y="675" width="25" height="25" fill="#cfcfcf"/>
<rect x="75" y="675" width="25" height="25" fill="#e9e9e9"/>
<rect x="100" y="675" width="25" height="25" fill="#f9f9f9"/>
<rect x="125" y="675" width="25" height="25" fill="#e1e1e1"/>
<rect x="150" y="675" width="25" height="25" fill="#dddddd"/>
<rect x="175" y="675" width="25" height="25" fill="#e0e0e0"/>
<rect x="200" y="675" width="50" height="25" fill="#dcdcdc"/>
<rect x="250" y="675" width="25" height="25" fill="#dddddd"/>
<rect x="275" y="675" width="25" height="25" fill="#dadada"/>
<rect x="300" y="675" width="25" height="25" fill="#dcdcdc"/>
<rect x="325" y="675" width="25" height="25" fill="#f4f4f4"/>
<rect x="350" y="675" width="25" height="25" fill="#ededed"/>
<rect x="375" y="675" width="25" height="25" fill="#dadada"/>
<rect x="400" y="675" width="25" height="25" fill="#dedede"/>
<rect x="425" y="675" width="50" height="25" fill="#dcdcdc"/>
<rect x="475" y="675" width="25" height="25" fill="#d9d9d9"/>
<rect x="500" y="675" width="25" height="25" fill="#f2f2f2"/>
<rect x="525" y="675" width="25" height="25" fill="#dedede"/>
<rect x="550" y="675" width="25" height="25" fill="#d3d3d3"/>
<rect x="575" y="675" width="25" height="25" fill="#d2d2d2"/>
<rect x="600" y="675" width="25" height="25" fill="#f4f4f4"/>
<rect x="625" y="675" width="25" height="25" fill="#f9f9f9"/>
<rect x="650" y="675" width="25" height="25" fill="#eeeeee"/>
<rect x="675" y="675" width="25" height="25" fill="#dcdcdc"/>
<rect x="700" y="675" width="25" height="25" fill="#f5f5f5"/>
<rect x="725" y="675" width="50" height="25" fill="#f9f9f9"/>
<rect x="775" y="675" width="25" height="25" fill="#e9e9e9"/>
<rect x="800" y="675" width="25" height="25" fill="#dbdbdb"/>
<rect x="825" y="675" width="25" height="25" fill="#d6d6d6"/>
<rect x="850" y="675" width="75" height="25" fill="#f9f9f9"/>
<rect x="925" y="675" width="25" height="25" fill="#e7e7e7"/>
<rect x="950" y="675" width="25" height="25" fill="#dcdcdc"/>
<rect x="975" y="675" width="25" height="25" fill="#f3f3f3"/>
<rect x="1000" y="675" width="25" height="25" fill="#f9f9f9"/>
<rect x="1025" y="675" width="25" height="25" fill="#ededed"/>
<rect x="1050" y="675" width="25" height="25" fill="#dcdcdc"/>
<rect x="1075" y="675" width="75" height="25" fill="#dbdbdb"/>
<rect x="1150" y="675" width="25" height="25" fill="#f9f9f9"/>
<rect x="1175" y="675" width="25" height="25" fill="#dddddd"/>
<rect x="1200" y="675" width="50" height="25" fill="#dedede"/>
<rect x="1250" y="675" width="25" height="25" fill="#e1e1e1"/>
<rect x="1275" y="675" width="25" height="25" fill="#dddddd"/>
<rect x="1300" y="675" width="25" height="25" fill="#f6f6f6"/>
<rect x="1325" y="675" width="162" height="25" fill="#f9f9f9"/>
<rect x="0" y="700" width="525" height="25" fill="#fdfdfd"/>
<rect x="525" y="700" width="25" height="25" fill="#f7f7f7"/>
<rect x="550" y="700" width="50" height="25" fill="#f2f2f2"/>
<rect x="600" y="700" width="887" height="25" fill="#fdfdfd"/>
<rect x="0" y="725" width="25" height="25" fill="#f5f5f5"/>
<rect x="25" y="725" width="25" height="25" fill="#fefefe"/>
<rect x="50" y="725" width="25" height="25" fill="#cecece"/>
<rect x="75" y="725" width="25" height="25" fill="#e9e9e9"/>
<rect x="100" y="725" width="25" height="25" fill="#ffffff"/>
<rect x="125" y="725" width="25" height="25" fill="#e3e3e3"/>
<rect x="150" y="725" width="25" height="25" fill="#dfdfdf"/>
<rect x="175" y="725" width="25" height="25" fill="#e0e0e0"/>
<rect x="200" y="725" width="25" height="25" fill="#dbdbdb"/>
<rect x="225" y="725" width="25" height="25" fill="#dadada"/>
<rect x="250" y="725" width="25" height="25" fill="#dcdcdc"/>
<rect x="275" y="725" width="25" height="25" fill="#dbdbdb"/>
<rect x="300" y="725" width="25" height="25" fill="#dcdcdc"/>
<rect x="325" y="725" width="25" height="25" fill="#fcfcfc"/>
<rect x="350" y="725" width="25" height="25" fill="#eeeeee"/>
<rect x="375" y="725" width="25" height="25" fill="#dbdbdb"/>
<rect x="400" y="725" width="25" height="25" fill="#dedede"/>
<rect x="425" y="725" width="25" height="25" fill="#d9d9d9"/>
<rect x="450" y="725" width="25" height="25" fill="#dddddd"/>
<rect x="475" y="725" width="25" height="25" fill="#d9d9d9"/>
<rect x="500" y="725" width="25" height="25" fill="#fafafa"/>
<rect x="525" y="725" width="25" height="25" fill="#dedede"/>
<rect x="550" y="725" width="25" height="25" fill="#d2d2d2"/>
<rect x="575" y="725" width="25" height="25" fill="#d7d7d7"/>
<rect x="600" y="725" width="25" height="25" fill="#f8f8f8"/>
<rect x="625" y="725" width="25" height="25" fill="#ffffff"/>
<rect x="650" y="725" width="25" height="25" fill="#fcfcfc"/>
<rect x="675" y="725" width="25" height="25" fill="#dbdbdb"/>
<rect x="700" y="725" width="25" height="25" fill="#fcfcfc"/>
<rect x="725" y="725" width="50" height="25" fill="#ffffff"/>
<rect x="775" y="725" width="25" height="25" fill="#ededed"/>
<rect x="800" y="725" width="25" height="25" fill="#d7d7d7"/>
<rect x="825" y="725" width="25" height="25" fill="#d4d4d4"/>
<rect x="850" y="725" width="75" height="25" fill="#ffffff"/>
<rect x="925" y="725" width="25" height="25" fill="#f8f8f8"/>
<rect x="950" y="725" width="25" height="25" fill="#dcdcdc"/>
<rect x="975" y="725" width="25" height="25" fill="#fbfbfb"/>
<rect x="1000" y="725" width="25" height="25" fill="#ffffff"/>
<rect x="1025" y="725" width="25" height="25" fill="#ededed"/>
<rect x="1050" y="725" width="25" height="25" fill="#dddddd"/>
<rect x="1075" y="725" width="25" height="25" fill="#dadada"/>
<rect x="1100" y="725" width="25" height="25" fill="#dddddd"/>
<rect x="1125" y="725" width="25" height="25" fill="#dbdbdb"/>
<rect x="1150" y="725" width="25" height="25" fill="#ffffff"/>
<rect x="1175" y="725" width="25" height="25" fill="#dfdfdf"/>
<rect x="1200" y="725" width="25" height="25" fill="#dedede"/>
<rect x="1225" y="725" width="25" height="25" fill="#dadada"/>
<rect x="1250" y="725" width="25" height="25" fill="#e1e1e1"/>
<rect x="1275" y="725" width="25" height="25" fill="#dcdcdc"/>
<rect x="1300" y="725" width="25" height="25" fill="#f9f9f9"/>
<rect x="1325" y="725" width="50" height="25" fill="#ffffff"/>
<rect x="1375" y="725" width="25" height="25" fill="#dddddd"/>
<rect x="1400" y="725" width="25" height="25" fill="#dedede"/>
<rect x="1425" y="725" width="25" height="25" fill="#e6e6e6"/>
<rect x="1450" y="725" width="37" height="25" fill="#ffffff"/>
<rect x="0" y="750" width="525" height="25" fill="#fbfbfb"/>
<rect x="525" y="750" width="25" height="25" fill="#f7f7f7"/>
<rect x="550" y="750" width="50" height="25" fill="#f1f1f1"/>
<rect x="600" y="750" width="887" height="25" fill="#fbfbfb"/>
<rect x="0" y="775" width="25" height="25" fill="#f3f3f3"/>
<rect x="25" y="775" width="25" height="25" fill="#f4f4f4"/>
<rect x="50" y="775" width="25" height="25" fill="#c6c6c6"/>
<rect x="75" y="775" width="25" height="25" fill="#e3e3e3"/>
<rect x="100" y="775" width="25" height="25" fill="#f9f9f9"/>
<rect x="125" y="775" width="25" height="25" fill="#dddddd"/>
<rect x="150" y="775" width="25" height="25" fill="#d5d5d5"/>
<rect x="175" y="775" width="25" height="25" fill="#d7d7d7"/>
<rect x="200" y="775" width="25" height="25" fill="#d3d3d3"/>
<rect x="225" y="775" width="25" height="25" fill="#d2d2d2"/>
<rect x="250" y="775" width="25" height="25" fill="#d5d5d5"/>
<rect x="275" y="775" width="25" height="25" fill="#d7d7d7"/>
<rect x="300" y="775" width="25" height="25" fill="#d9d9d9"/>
<rect x="325" y="775" width="25" height="25" fill="#f6f6f6"/>
<rect x="350" y="775" width="25" height="25" fill="#ebebeb"/>
<rect x="375" y="775" width="25" height="25" fill="#d5d5d5"/>
<rect x="400" y="775" width="25" height="25" fill="#d4d4d4"/>
<rect x="425" y="775" width="25" height="25" fill="#d5d5d5"/>
<rect x="450" y="775" width="25" height="25" fill="#d4d4d4"/>
<rect x="475" y="775" width="25" height="25" fill="#d0d0d0"/>
<rect x="500" y="775" width="25" height="25" fill="#f3f3f3"/>
<rect x="525" y="775" width="25" height="25" fill="#dadada"/>
<rect x="550" y="775" width="25" height="25" fill="#cbcbcb"/>
<rect x="575" y="775" width="25" height="25" fill="#d0d0d0"/>
<rect x="600" y="775" width="25" height="25" fill="#f0f0f0"/>
<rect x="625" y="775" width="25" height="25" fill="#f9f9f9"/>
<rect x="650" y="775" width="25" height="25" fill="#e4e4e4"/>
<rect x="675" y="775" width="25" height="25" fill="#cbcbcb"/>
<rect x="700" y="775" width="25" height="25" fill="#ededed"/>
<rect x="725" y="775" width="50" height="25" fill="#f9f9f9"/>
<rect x="775" y="775" width="25" height="25" fill="#e8e8e8"/>
<rect x="800" y="775" width="25" height="25" fill="#d5d5d5"/>
<rect x="825" y="775" width="25" height="25" fill="#cecece"/>
<rect x="850" y="775" width="75" height="25" fill="#f9f9f9"/>
<rect x="925" y="775" width="25" height="25" fill="#e0e0e0"/>
<rect x="950" y="775" width="25" height="25" fill="#d2d2d2"/>
<rect x="975" y="775" width="25" height="25" fill="#f4f4f4"/>
<rect x="1000" y="775" width="25" height="25" fill="#f9f9f9"/>
<rect x="1025" y="775" width="25" height="25" fill="#e5e5e5"/>
<rect x="1050" y="775" width="25" height="25" fill="#d8d8d8"/>
<rect x="1075" y="775" width="25" height="25" fill="#d4d4d4"/>
<rect x="1100" y="775" width="25" height="25" fill="#d2d2d2"/>
<rect x="1125" y="775" width="25" height="25" fill="#d6d6d6"/>
<rect x="1150" y="775" width="25" height="25" fill="#f9f9f9"/>
<rect x="1175" y="775" width="25" height="25" fill="#d6d6d6"/>
<rect x="1200" y="775" width="25" height="25" fill="#d8d8d8"/>
<rect x="1225" y="775" width="25" height="25" fill="#d4d4d4"/>
<rect x="1250" y="775" width="25" height="25" fill="#d9d9d9"/>
<rect x="1275" y="775" width="25" height="25" fill="#d3d3d3"/>
<rect x="1300" y="775" width="25" height="25" fill="#f3f3f3"/>
<rect x="1325" y="775" width="162" height="25" fill="#f9f9f9"/>
<rect x="0" y="800" width="525" height="25" fill="#fafafa"/>
<rect x="525" y="800" width="25" height="25" fill="#f4f4f4"/>
<rect x="550" y="800" width="25" height="25" fill="#f0f0f0"/>
<rect x="575" y="800" width="25" height="25" fill="#efefef"/>
<rect x="600" y="800" width="887" height="25" fill="#fafafa"/>
<rect x="50" y="825" width="25" height="25" fill="#d4d4d4"/>
<rect x="75" y="825" width="25" height="25" fill="#ececec"/>
<rect x="100" y="825" width="25" height="25" fill="#ffffff"/>
<rect x="125" y="825" width="25" height="25" fill="#e6e6e6"/>
<rect x="150" y="825" width="25" height="25" fill="#dfdfdf"/>
<rect x="175" y="825" width="25" height="25" fill="#e4e4e4"/>
<rect x="200" y="825" width="25" height="25" fill="#dfdfdf"/>
<rect x="225" y="825" width="25" height="25" fill="#e0e0e0"/>
<rect x="250" y="825" width="25" height="25" fill="#dddddd"/>
<rect x="275" y="825" width="25" height="25" fill="#e1e1e1"/>
<rect x="300" y="825" width="25" height="25" fill="#e2e2e2"/>
<rect x="325" y="825" width="25" height="25" fill="#fdfdfd"/>
<rect x="350" y="825" width="25" height="25" fill="#f2f2f2"/>
<rect x="375" y="825" width="25" height="25" fill="#dedede"/>
<rect x="400" y="825" width="75" height="25" fill="#dfdfdf"/>
<rect x="475" y="825" width="25" height="25" fill="#dedede"/>
<rect x="500" y="825" width="25" height="25" fill="#f8f8f8"/>
<rect x="525" y="825" width="25" height="25" fill="#e3e3e3"/>
<rect x="550" y="825" width="25" height="25" fill="#d4d4d4"/>
<rect x="575" y="825" width="25" height="25" fill="#d9d9d9"/>
<rect x="600" y="825" width="25" height="25" fill="#f8f8f8"/>
<rect x="625" y="825" width="25" height="25" fill="#ffffff"/>
<rect x="650" y="825" width="25" height="25" fill="#f0f0f0"/>
<rect x="675" y="825" width="25" height="25" fill="#e7e7e7"/>
<rect x="700" y="825" width="25" height="25" fill="#f8f8f8"/>
<rect x="725" y="825" width="50" height="25" fill="#ffffff"/>
<rect x="775" y="825" width="25" height="25" fill="#f0f0f0"/>
<rect x="800" y="825" width="25" height="25" fill="#e0e0e0"/>
<rect x="825" y="825" width="25" height="25" fill="#d9d9d9"/>
<rect x="850" y="825" width="75" height="25" fill="#ffffff"/>
<rect x="925" y="825" width="25" height="25" fill="#e9e9e9"/>
<rect x="950" y="825" width="25" height="25" fill="#dddddd"/>
<rect x="975" y="825" width="25" height="25" fill="#f8f8f8"/>
<rect x="1000" y="825" width="25" height="25" fill="#ffffff"/>
<rect x="1025" y="825" width="25" height="25" fill="#efefef"/>
<rect x="1050" y="825" width="25" height="25" fill="#e2e2e2"/>
<rect x="1075" y="825" width="25" height="25" fill="#dfdfdf"/>
<rect x="1100" y="825" width="25" height="25" fill="#e1e1e1"/>
<rect x="1125" y="825" width="25" height="25" fill="#e0e0e0"/>
<rect x="1150" y="825" width="25" height="25" fill="#ffffff"/>
<rect x="1175" y="825" width="25" height="25" fill="#e2e2e2"/>
<rect x="1200" y="825" width="25" height="25" fill="#e3e3e3"/>
<rect x="1225" y="825" width="25" height="25" fill="#e1e1e1"/>
<rect x="1250" y="825" width="25" height="25" fill="#e5e5e5"/>
<rect x="1275" y="825" width="25" height="25" fill="#e0e0e0"/>
<rect x="1300" y="825" width="25" height="25" fill="#fbfbfb"/>
<rect x="1325" y="825" width="162" height="25" fill="#ffffff"/>
<rect x="50" y="850" width="25" height="25" fill="#f9f9f9"/>
<rect x="75" y="850" width="25" height="25" fill="#fcfcfc"/>
<rect x="100" y="850" width="25" height="25" fill="#fefefe"/>
<rect x="125" y="850" width="25" height="25" fill="#fbfbfb"/>
<rect x="150" y="850" width="175" height="25" fill="#fafafa"/>
<rect x="325" y="850" width="25" height="25" fill="#fefefe"/>
<rect x="350" y="850" width="25" height="25" fill="#fcfcfc"/>
<rect x="375" y="850" width="125" height="25" fill="#fafafa"/>
<rect x="500" y="850" width="25" height="25" fill="#fefefe"/>
<rect x="525" y="850" width="25" height="25" fill="#f7f7f7"/>
<rect x="550" y="850" width="25" height="25" fill="#f4f4f4"/>
<rect x="575" y="850" width="25" height="25" fill="#f3f3f3"/>
<rect x="600" y="850" width="25" height="25" fill="#fdfdfd"/>
<rect x="625" y="850" width="25" height="25" fill="#fefefe"/>
<rect x="650" y="850" width="25" height="25" fill="#fdfdfd"/>
<rect x="675" y="850" width="25" height="25" fill="#fbfbfb"/>
<rect x="700" y="850" width="25" height="25" fill="#fdfdfd"/>
<rect x="725" y="850" width="50" height="25" fill="#fefefe"/>
<rect x="775" y="850" width="25" height="25" fill="#fcfcfc"/>
<rect x="800" y="850" width="25" height="25" fill="#fafafa"/>
<rect x="825" y="850" width="25" height="25" fill="#f9f9f9"/>
<rect x="850" y="850" width="75" height="25" fill="#fefefe"/>
<rect x="925" y="850" width="25" height="25" fill="#fcfcfc"/>
<rect x="950" y="850" width="25" height="25" fill="#fafafa"/>
<rect x="975" y="850" width="25" height="25" fill="#fdfdfd"/>
<rect x="1000" y="850" width="25" height="25" fill="#fefefe"/>
<rect x="1025" y="850" width="25" height="25" fill="#fcfcfc"/>
<rect x="1050" y="850" width="25" height="25" fill="#fbfbfb"/>
<rect x="1075" y="850" width="75" height="25" fill="#fafafa"/>
<rect x="1150" y="850" width="25" height="25" fill="#fefefe"/>
<rect x="1175" y="850" width="75" height="25" fill="#fafafa"/>
<rect x="1250" y="850" width="25" height="25" fill="#fbfbfb"/>
<rect x="1275" y="850" width="25" height="25" fill="#fafafa"/>
<rect x="1300" y="850" width="187" height="25" fill="#fefefe"/>
</svg>
 <div id="acts" class="abs"><span style="background:#c3e0c3;color:#5a9a4a">배송준비중</span><span style="background:#e4e4e4;color:#888">배송중</span><span style="background:#748226;color:#ffffcc">교환접수</span><span style="background:#8f2222;color:#ffb0b0">반품접수</span><span style="background:#e4e4e4;color:#888;padding-right:8px"><u>CSV</u> 다운로드</span></div>
 <div class="inp" style="left:1430px;top:1553px;width:35px;height:28px;padding:0 2px;font-family:'Liberation Serif',serif;font-size:17px;line-height:28px;border-color:#767676;letter-spacing:0">1</div>
 <svg class="abs" style="left:1475px;top:1559px" width="16" height="18" viewBox="0 0 16 18"><path d="M1.5 1.5 L13.5 8.5 L1.5 15.5 Z" fill="#fff" stroke="#888" stroke-width="1"/></svg>
</div>
</body>
</html>
